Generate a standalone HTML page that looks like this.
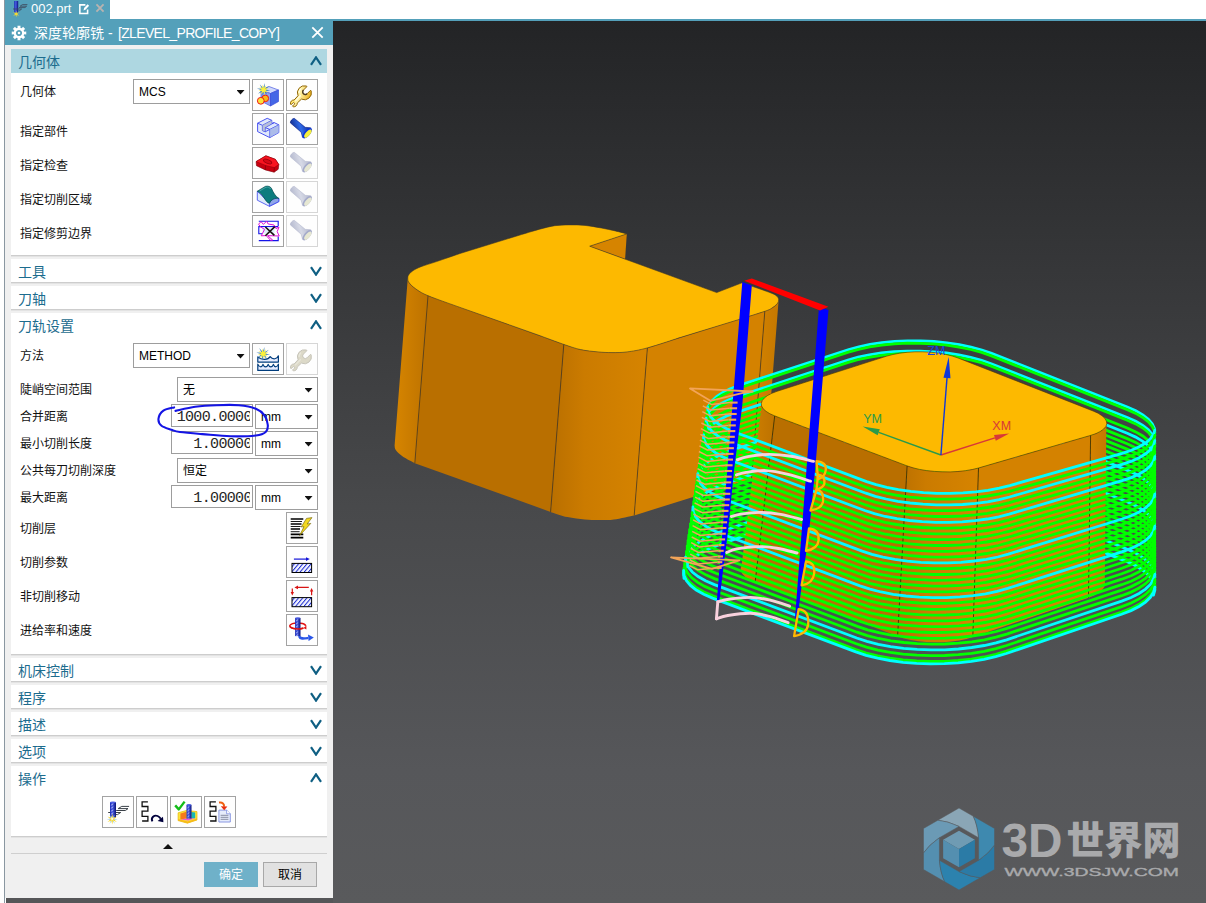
<!DOCTYPE html>
<html lang="zh"><head><meta charset="utf-8"><title>NX</title><style>
*{box-sizing:border-box;margin:0;padding:0}
html,body{width:1206px;height:903px;overflow:hidden;background:#fff}
body{position:relative;font-family:"Liberation Sans","Noto Sans CJK SC",sans-serif;font-size:12px;color:#000}
#vp{overflow:hidden;position:absolute;left:333px;top:21px;width:873px;height:882px;background:linear-gradient(#232426 0%,#48494b 55%,#56575a 85%,#595a5c 100%)}
#vp svg{position:absolute;left:-333px;top:-21px}
#topline{position:absolute;left:5px;top:19px;width:1201px;height:2px;background:#54a0ba}
#tab{position:absolute;left:5px;top:0;width:105px;height:20px;background:#54a0ba;color:#fff;font-size:13px}
#tab span{position:absolute;left:26px;top:1px;line-height:16px}
#title{position:absolute;left:5px;top:19px;width:328px;height:26px;background:#54a0ba;color:#fff;font-size:14px}
#title em{font-style:normal;font-size:14px;letter-spacing:-0.66px;margin-left:1.5px}
#title span{position:absolute;left:29px;top:4px;line-height:20px;white-space:nowrap}
#lline{position:absolute;left:4px;top:0;width:1px;height:903px;background:#8a97a1}
#pbg{position:absolute;left:5px;top:45px;width:328px;height:853px;background:#f0f0f0}
#pbot{position:absolute;left:6px;top:898px;width:327px;height:5px;background:#555658}
.sec{position:absolute;left:11px;width:316px;background:#fff;border-bottom:1px solid #cdcdcd;box-shadow:0 1px 0 #e3e3e3}
.sec b{position:absolute;left:7px;top:3px;font-weight:normal;font-size:14px;line-height:20px;color:#1c6c8e}
.sec.hl::before{content:"";position:absolute;left:0;top:0;width:316px;height:24px;background:#aed7e1}
.sec .chev{position:absolute;right:5px;top:7px;width:12px;height:10px;fill:none;stroke:#0f5f83;stroke-width:2.2}
.lbl{position:absolute;font-size:12px;line-height:16px;white-space:nowrap;color:#111}
.dd{position:absolute;background:#fff;border:1px solid #9d9d9d}
.dd span{position:absolute;top:4px;line-height:17px;font-size:12px;white-space:nowrap}
.dd i{position:absolute;right:4.5px;top:10px;width:8px;height:4.5px;background:#111;clip-path:polygon(0 0,100% 0,50% 100%)}
.inp{position:absolute;background:#fff;border:1px solid #9d9d9d;overflow:hidden}
.inp b{position:absolute;left:0;top:0;bottom:0;right:2.5px;overflow:hidden;font-weight:normal}
.inp span{position:absolute;right:-2.3px;top:2.5px;line-height:20px;font-family:"Liberation Mono",monospace;font-size:15px;white-space:nowrap;letter-spacing:-0.65px;color:#262626}
.btn{position:absolute;width:32px;height:32px;border:1px solid #a3a3a3;background:#fefefe}
.btn.dis{border-color:#d6d6d6}
.btn svg{position:absolute;left:0;top:0;width:30px;height:30px}
#sepa{position:absolute;left:11px;top:853px;width:316px;height:1px;background:#cfcfcf}
#tri{position:absolute;left:163px;top:844px;width:0;height:0;border-left:5px solid transparent;border-right:5px solid transparent;border-bottom:5px solid #111}
#ok{position:absolute;left:204px;top:862px;width:54px;height:25px;background:#6fb1c9;color:#fff;text-align:center;line-height:26px;font-size:12px}
#cancel{position:absolute;left:263px;top:862px;width:54px;height:25px;background:#e1e1e1;border:1px solid #a8a8a8;text-align:center;line-height:24px;font-size:12px}
</style></head><body>
<div id="vp"><svg width="1206" height="903" viewBox="0 0 1206 903">
<defs><linearGradient id="gc1" x1="0" x2="1" y1="0" y2="0"><stop offset="0" stop-color="#b96f00"/><stop offset=".35" stop-color="#cb7b00"/><stop offset="1" stop-color="#d68400"/></linearGradient><linearGradient id="gc2" x1="0" x2="1" y1="0" y2="0"><stop offset="0" stop-color="#d68400"/><stop offset="1" stop-color="#c57800"/></linearGradient><linearGradient id="gc3" x1="0" x2="1" y1="0" y2="0"><stop offset="0" stop-color="#d68500"/><stop offset="1" stop-color="#bd7200"/></linearGradient></defs>
<path d="M589.7,246.2 L626.8,233.9 L625.1,258.9 Z" fill="#d68400"/>
<path d="M407.80,277.90 C408.00,278.68 407.70,280.78 409.00,282.60 C410.30,284.42 412.40,286.60 415.60,288.80 C418.80,291.00 426.10,294.63 428.20,295.80 L415.00,463.30 C412.90,462.13 405.60,458.50 402.40,456.30 C399.20,454.10 397.10,451.92 395.80,450.10 C394.50,448.28 394.80,446.18 394.60,445.40Z" fill="url(#gc3)"/>
<path d="M428.0,295.7 L563.8,344.4 L550.6,511.9 L414.8,463.2Z" fill="#b96f00"/>
<path d="M563.80,344.40 C566.60,345.27 574.90,348.35 580.60,349.60 C586.30,350.85 592.77,351.40 598.00,351.90 C603.23,352.40 607.15,352.60 612.00,352.60 C616.85,352.60 621.20,352.68 627.10,351.90 C633.00,351.12 644.02,348.57 647.40,347.90 L634.20,515.40 C630.82,516.07 619.80,518.62 613.90,519.40 C608.00,520.18 603.65,520.10 598.80,520.10 C593.95,520.10 590.03,519.90 584.80,519.40 C579.57,518.90 573.10,518.35 567.40,517.10 C561.70,515.85 553.40,512.77 550.60,511.90Z" fill="url(#gc1)"/>
<path d="M647.4,347.9 L764.8,311.3 L751.6,478.8 L634.2,515.4Z" fill="#d48200"/>
<path d="M764.80,311.30 C765.93,310.80 769.67,309.42 771.60,308.30 C773.53,307.18 775.23,305.90 776.40,304.60 C777.57,303.30 778.23,301.18 778.60,300.50 L765.40,468.00 C765.03,468.68 764.37,470.80 763.20,472.10 C762.03,473.40 760.33,474.68 758.40,475.80 C756.47,476.92 752.73,478.30 751.60,478.80Z" fill="url(#gc2)"/>
<path d="M460.00,307.40 C454.67,305.45 435.40,298.80 428.00,295.70 C420.60,292.60 418.77,290.98 415.60,288.80 C412.43,286.62 410.30,284.42 409.00,282.60 C407.70,280.78 407.80,279.27 407.80,277.90 C407.80,276.53 408.08,275.63 409.00,274.40 C409.92,273.17 411.30,271.78 413.30,270.50 C415.30,269.22 417.13,268.18 421.00,266.70 C424.87,265.22 430.00,263.80 436.50,261.60 C443.00,259.40 456.08,254.85 460.00,253.50 L520.00,235.00 C523.28,234.03 533.90,230.75 539.70,229.20 C545.50,227.65 549.95,226.42 554.80,225.70 C559.65,224.98 563.77,224.95 568.80,224.90 C573.83,224.85 579.58,224.88 585.00,225.40 C590.42,225.92 596.27,227.08 601.30,228.00 C606.33,228.92 610.95,229.92 615.20,230.90 C619.45,231.88 624.87,233.40 626.80,233.90 L589.7,246.2 L716.7,292.6 L742.00,282.80 C745.00,283.83 755.17,287.30 760.00,289.00 C764.83,290.70 768.40,291.97 771.00,293.00 C773.60,294.03 774.38,294.37 775.60,295.20 C776.82,296.03 777.83,296.93 778.30,298.00 C778.77,299.07 778.72,300.50 778.40,301.60 C778.08,302.70 777.53,303.48 776.40,304.60 C775.27,305.72 773.53,307.18 771.60,308.30 C769.67,309.42 770.07,309.48 764.80,311.30 C759.53,313.12 744.13,317.88 740.00,319.20 L680.00,337.60 C674.57,339.32 656.22,345.52 647.40,347.90 C638.58,350.28 633.00,351.12 627.10,351.90 C621.20,352.68 616.85,352.60 612.00,352.60 C607.15,352.60 603.23,352.40 598.00,351.90 C592.77,351.40 586.30,350.85 580.60,349.60 C574.90,348.35 570.57,346.72 563.80,344.40 C557.03,342.08 543.97,337.15 540.00,335.70Z" fill="#fdb900" stroke="#3a3326" stroke-width="0.55"/>
<g stroke="#2c2a26" stroke-width="0.7" fill="none" opacity=".85">
<path d="M428,295.7 L414.8,463.2"/>
<path d="M563.8,344.4 L550.6,511.9"/>
<path d="M647.4,347.9 L634.2,515.4"/>
<path d="M764.8,311.3 L751.6,478.8"/>
</g>
<g fill="none" stroke-width="2.8" stroke-linecap="round">
<path d="M1153.4,437.4 L1154.8,432.9 L1154.4,428.3 L1152.2,423.7 L1148.4,419.2 L1142.8,414.9 L1135.8,410.8 L1127.3,407.0 L991.6,353.4 L981.9,350.0 L971.0,347.1 L959.3,344.6 L946.9,342.8 L934.0,341.5 L920.8,340.8 L907.6,340.8 L894.6,341.4 L882.0,342.6 L870.0,344.4 L858.9,346.8 L848.8,349.6 L739.3,385.4 L730.4,388.8 L722.8,392.5 L716.6,396.5 L712.0,400.8 L709.0,405.3 L707.7,409.8 L708.1,414.4" stroke="#00ffff"/>
<path d="M1153.5,440.0 L1154.8,435.5 L1154.4,430.9 L1152.2,426.3 L1148.4,421.8 L1142.8,417.5 L1135.8,413.4 L1127.3,409.6 L991.5,355.9 L981.7,352.4 L970.9,349.5 L959.1,347.1 L946.7,345.2 L933.7,343.9 L920.5,343.3 L907.3,343.2 L894.3,343.8 L881.7,345.1 L869.7,346.9 L858.5,349.3 L848.4,352.2 L738.6,388.2 L729.6,391.5 L722.0,395.3 L715.8,399.3 L711.2,403.6 L708.2,408.1 L706.9,412.7 L707.3,417.3" stroke="#00ff00"/>
<path d="M1153.5,448.1 L1154.8,443.6 L1154.4,439.0 L1152.2,434.4 L1148.4,429.8 L1142.8,425.5 L1135.8,421.3 L1127.3,417.5 L991.3,363.7 L981.6,360.3 L970.7,357.3 L958.9,354.9 L946.5,353.0 L933.5,351.8 L920.3,351.1 L907.0,351.1 L894.0,351.7 L881.3,352.9 L869.3,354.8 L858.1,357.2 L847.9,360.1 L737.9,396.3 L728.9,399.7 L721.2,403.4 L715.0,407.5 L710.4,411.8 L707.4,416.3 L706.1,420.9 L706.5,425.5" stroke="#00ffff"/>
<path d="M1153.5,450.8 L1154.8,446.2 L1154.4,441.6 L1152.2,437.0 L1148.4,432.4 L1142.8,428.0 L1135.7,423.9 L1127.2,420.1 L991.2,366.1 L981.4,362.7 L970.5,359.8 L958.7,357.3 L946.2,355.5 L933.3,354.2 L920.0,353.6 L906.8,353.5 L893.7,354.2 L881.0,355.4 L868.9,357.3 L857.7,359.7 L847.5,362.6 L737.1,399.0 L728.1,402.4 L720.4,406.2 L714.2,410.3 L709.6,414.7 L706.6,419.2 L705.2,423.8 L705.6,428.4" stroke="#00ff00"/>
<path d="M1153.5,458.8 L1154.8,454.3 L1154.4,449.6 L1152.2,445.0 L1148.3,440.4 L1142.8,436.0 L1135.7,431.9 L1127.2,428.0 L991.0,374.0 L981.2,370.6 L970.3,367.6 L958.5,365.2 L946.0,363.3 L933.0,362.0 L919.8,361.4 L906.5,361.4 L893.4,362.0 L880.6,363.3 L868.6,365.2 L857.3,367.6 L847.1,370.6 L736.4,407.2 L727.4,410.6 L719.7,414.4 L713.4,418.5 L708.7,422.9 L705.7,427.4 L704.4,432.0 L704.8,436.7" stroke="#00ff00"/>
<path d="M1153.5,464.2 L1154.8,459.6 L1154.4,454.9 L1152.2,450.3 L1148.3,445.7 L1142.8,441.3 L1135.7,437.1 L1127.2,433.3 L990.9,379.1 L981.1,375.7 L970.2,372.7 L958.4,370.3 L945.8,368.4 L932.8,367.2 L919.5,366.5 L906.2,366.6 L893.0,367.2 L880.3,368.5 L868.2,370.4 L856.9,372.8 L846.7,375.8 L735.7,412.6 L726.6,416.0 L718.9,419.9 L712.6,424.0 L707.9,428.4 L704.9,433.0 L703.6,437.6 L704.0,442.3" stroke="#00ffff"/>
<path d="M1153.5,469.6 L1154.8,465.0 L1154.4,460.3 L1152.2,455.6 L1148.3,451.0 L1142.8,446.6 L1135.7,442.4 L1127.2,438.6 L990.7,384.3 L980.9,380.8 L970.0,377.9 L958.2,375.4 L945.6,373.6 L932.6,372.3 L919.3,371.7 L905.9,371.7 L892.7,372.4 L880.0,373.7 L867.8,375.6 L856.5,378.0 L846.2,381.0 L734.9,418.0 L725.8,421.5 L718.1,425.3 L711.8,429.5 L707.1,433.9 L704.1,438.5 L702.8,443.2 L703.2,447.8" stroke="#00ff00"/>
<path d="M1153.5,474.9 L1154.8,470.3 L1154.4,465.6 L1152.2,460.9 L1148.3,456.3 L1142.8,451.9 L1135.7,447.7 L1127.1,443.8 L990.6,389.4 L980.7,386.0 L969.8,383.0 L958.0,380.6 L945.4,378.7 L932.3,377.5 L919.0,376.8 L905.6,376.9 L892.4,377.5 L879.6,378.8 L867.5,380.7 L856.1,383.2 L845.8,386.2 L734.2,423.5 L725.1,426.9 L717.3,430.8 L711.0,435.0 L706.3,439.4 L703.3,444.0 L702.0,448.7 L702.4,453.4" stroke="#00ff00"/>
<path d="M1153.5,480.3 L1154.8,475.6 L1154.4,470.9 L1152.2,466.2 L1148.3,461.6 L1142.8,457.1 L1135.7,452.9 L1127.1,449.1 L990.4,394.6 L980.6,391.1 L969.6,388.1 L957.8,385.7 L945.2,383.8 L932.1,382.6 L918.8,382.0 L905.3,382.0 L892.1,382.7 L879.3,384.0 L867.1,385.9 L855.7,388.4 L845.4,391.5 L733.5,428.9 L724.3,432.4 L716.5,436.3 L710.2,440.5 L705.5,444.9 L702.5,449.6 L701.1,454.3 L701.5,459.0" stroke="#00ff00"/>
<path d="M1153.5,485.7 L1154.8,481.0 L1154.4,476.2 L1152.2,471.5 L1148.3,466.9 L1142.8,462.4 L1135.7,458.2 L1127.1,454.3 L990.3,399.7 L980.4,396.3 L969.5,393.3 L957.6,390.8 L945.0,389.0 L931.9,387.7 L918.5,387.1 L905.1,387.2 L891.8,387.9 L879.0,389.2 L866.7,391.1 L855.3,393.6 L845.0,396.7 L732.7,434.4 L723.6,437.9 L715.8,441.8 L709.4,446.0 L704.7,450.5 L701.6,455.1 L700.3,459.8 L700.7,464.6" stroke="#00ff00"/>
<path d="M1153.5,491.0 L1154.8,486.3 L1154.4,481.6 L1152.2,476.8 L1148.3,472.2 L1142.8,467.7 L1135.6,463.5 L1127.1,459.6 L990.1,404.9 L980.3,401.4 L969.3,398.4 L957.4,396.0 L944.8,394.1 L931.7,392.9 L918.2,392.3 L904.8,392.3 L891.5,393.0 L878.6,394.4 L866.4,396.3 L854.9,398.9 L844.5,401.9 L732.0,439.8 L722.8,443.3 L715.0,447.2 L708.6,451.5 L703.9,456.0 L700.8,460.6 L699.5,465.4 L699.9,470.1" stroke="#00ff00"/>
<path d="M1153.5,496.4 L1154.8,491.7 L1154.4,486.9 L1152.2,482.1 L1148.3,477.5 L1142.8,473.0 L1135.6,468.7 L1127.0,464.8 L990.0,410.0 L980.1,406.5 L969.1,403.5 L957.2,401.1 L944.6,399.2 L931.4,398.0 L918.0,397.4 L904.5,397.5 L891.2,398.2 L878.3,399.5 L866.0,401.5 L854.5,404.1 L844.1,407.1 L731.3,445.2 L722.1,448.8 L714.2,452.7 L707.8,457.0 L703.1,461.5 L700.0,466.2 L698.7,470.9 L699.1,475.7" stroke="#00ff00"/>
<path d="M1153.5,501.8 L1154.8,497.0 L1154.4,492.2 L1152.2,487.4 L1148.3,482.7 L1142.7,478.2 L1135.6,474.0 L1127.0,470.1 L989.8,415.1 L979.9,411.7 L968.9,408.7 L957.0,406.2 L944.4,404.4 L931.2,403.1 L917.7,402.6 L904.2,402.6 L890.9,403.4 L877.9,404.7 L865.6,406.7 L854.1,409.3 L843.7,412.4 L730.6,450.7 L721.3,454.2 L713.4,458.2 L707.1,462.5 L702.3,467.0 L699.2,471.7 L697.8,476.5 L698.3,481.3" stroke="#00ffff"/>
<path d="M1153.5,507.1 L1154.8,502.4 L1154.4,497.5 L1152.2,492.7 L1148.3,488.0 L1142.7,483.5 L1135.6,479.3 L1127.0,475.4 L989.7,420.3 L979.8,416.8 L968.8,413.8 L956.8,411.4 L944.1,409.5 L931.0,408.3 L917.5,407.7 L903.9,407.8 L890.6,408.5 L877.6,409.9 L865.3,411.9 L853.8,414.5 L843.3,417.6 L729.8,456.1 L720.6,459.7 L712.7,463.7 L706.3,468.0 L701.5,472.5 L698.4,477.2 L697.0,482.1 L697.4,486.9" stroke="#00ff00"/>
<path d="M1153.5,512.5 L1154.8,507.7 L1154.4,502.9 L1152.2,498.0 L1148.3,493.3 L1142.7,488.8 L1135.6,484.5 L1127.0,480.6 L989.5,425.4 L979.6,421.9 L968.6,418.9 L956.6,416.5 L943.9,414.6 L930.7,413.4 L917.2,412.8 L903.7,412.9 L890.3,413.7 L877.3,415.1 L864.9,417.1 L853.4,419.7 L842.9,422.8 L729.1,461.5 L719.8,465.1 L711.9,469.1 L705.5,473.5 L700.7,478.0 L697.6,482.8 L696.2,487.6 L696.6,492.5" stroke="#00ff00"/>
<path d="M1153.5,517.9 L1154.8,513.1 L1154.4,508.2 L1152.2,503.4 L1148.3,498.6 L1142.7,494.1 L1135.6,489.8 L1127.0,485.9 L989.4,430.6 L979.5,427.1 L968.4,424.1 L956.4,421.6 L943.7,419.8 L930.5,418.6 L917.0,418.0 L903.4,418.1 L889.9,418.9 L876.9,420.3 L864.5,422.3 L853.0,424.9 L842.4,428.0 L728.4,467.0 L719.0,470.6 L711.1,474.6 L704.7,479.0 L699.9,483.6 L696.7,488.3 L695.4,493.2 L695.8,498.0" stroke="#00ff00"/>
<path d="M1153.5,523.2 L1154.8,518.4 L1154.4,513.5 L1152.2,508.7 L1148.3,503.9 L1142.7,499.4 L1135.5,495.1 L1126.9,491.1 L989.2,435.7 L979.3,432.2 L968.2,429.2 L956.3,426.8 L943.5,424.9 L930.3,423.7 L916.7,423.1 L903.1,423.2 L889.6,424.0 L876.6,425.4 L864.2,427.5 L852.6,430.1 L842.0,433.3 L727.6,472.4 L718.3,476.0 L710.3,480.1 L703.9,484.5 L699.0,489.1 L695.9,493.9 L694.6,498.7 L695.0,503.6" stroke="#00ff00"/>
<path d="M1153.5,528.6 L1154.8,523.8 L1154.4,518.8 L1152.2,514.0 L1148.3,509.2 L1142.7,504.6 L1135.5,500.3 L1126.9,496.4 L989.1,440.9 L979.1,437.4 L968.1,434.3 L956.1,431.9 L943.3,430.0 L930.0,428.8 L916.5,428.3 L902.8,428.4 L889.3,429.2 L876.2,430.6 L863.8,432.7 L852.2,435.3 L841.6,438.5 L726.9,477.8 L717.5,481.5 L709.5,485.6 L703.1,489.9 L698.2,494.6 L695.1,499.4 L693.7,504.3 L694.2,509.2" stroke="#00ff00"/>
<path d="M1153.5,534.0 L1154.8,529.1 L1154.4,524.2 L1152.2,519.3 L1148.3,514.5 L1142.7,509.9 L1135.5,505.6 L1126.9,501.7 L988.9,446.0 L979.0,442.5 L967.9,439.5 L955.9,437.0 L943.1,435.2 L929.8,434.0 L916.2,433.4 L902.5,433.6 L889.0,434.3 L875.9,435.8 L863.4,437.9 L851.8,440.5 L841.2,443.7 L726.2,483.3 L716.8,487.0 L708.8,491.0 L702.3,495.4 L697.4,500.1 L694.3,504.9 L692.9,509.8 L693.3,514.8" stroke="#00ffff"/>
<path d="M1153.5,539.3 L1154.8,534.4 L1154.4,529.5 L1152.2,524.6 L1148.3,519.8 L1142.7,515.2 L1135.5,510.9 L1126.9,506.9 L988.7,451.2 L978.8,447.6 L967.7,444.6 L955.7,442.2 L942.9,440.3 L929.6,439.1 L915.9,438.6 L902.2,438.7 L888.7,439.5 L875.6,441.0 L863.1,443.1 L851.4,445.7 L840.7,449.0 L725.4,488.7 L716.0,492.4 L708.0,496.5 L701.5,500.9 L696.6,505.6 L693.5,510.5 L692.1,515.4 L692.5,520.3" stroke="#00ff00"/>
<path d="M1153.5,544.7 L1154.8,539.8 L1154.4,534.8 L1152.2,529.9 L1148.3,525.1 L1142.7,520.5 L1135.5,516.1 L1126.8,512.2 L988.6,456.3 L978.6,452.8 L967.5,449.8 L955.5,447.3 L942.7,445.5 L929.3,444.3 L915.7,443.7 L902.0,443.9 L888.4,444.7 L875.2,446.1 L862.7,448.3 L851.0,450.9 L840.3,454.2 L724.7,494.2 L715.3,497.9 L707.2,502.0 L700.7,506.4 L695.8,511.1 L692.7,516.0 L691.3,521.0 L691.7,525.9" stroke="#00ff00"/>
<path d="M1153.5,550.1 L1154.8,545.1 L1154.4,540.2 L1152.2,535.2 L1148.3,530.4 L1142.7,525.7 L1135.5,521.4 L1126.8,517.4 L988.4,461.5 L978.5,457.9 L967.4,454.9 L955.3,452.4 L942.5,450.6 L929.1,449.4 L915.4,448.9 L901.7,449.0 L888.1,449.8 L874.9,451.3 L862.3,453.4 L850.6,456.2 L839.9,459.4 L724.0,499.6 L714.5,503.3 L706.4,507.5 L699.9,511.9 L695.0,516.7 L691.8,521.5 L690.5,526.5 L690.9,531.5" stroke="#00ff00"/>
<path d="M1153.5,555.4 L1154.9,550.5 L1154.4,545.5 L1152.2,540.5 L1148.3,535.7 L1142.7,531.0 L1135.5,526.7 L1126.8,522.7 L988.3,466.6 L978.3,463.1 L967.2,460.0 L955.1,457.6 L942.3,455.7 L928.9,454.5 L915.2,454.0 L901.4,454.2 L887.8,455.0 L874.6,456.5 L862.0,458.6 L850.2,461.4 L839.5,464.6 L723.3,505.0 L713.8,508.8 L705.7,512.9 L699.1,517.4 L694.2,522.2 L691.0,527.1 L689.6,532.1 L690.1,537.1" stroke="#00ff00"/>
<path d="M1153.5,560.8 L1154.9,555.8 L1154.4,550.8 L1152.2,545.8 L1148.3,541.0 L1142.6,536.3 L1135.4,531.9 L1126.8,527.9 L988.1,471.7 L978.2,468.2 L967.0,465.2 L954.9,462.7 L942.0,460.9 L928.6,459.7 L914.9,459.2 L901.1,459.3 L887.5,460.2 L874.2,461.7 L861.6,463.8 L849.8,466.6 L839.0,469.9 L722.5,510.5 L713.0,514.2 L704.9,518.4 L698.3,522.9 L693.4,527.7 L690.2,532.6 L688.8,537.6 L689.2,542.6" stroke="#00ff00"/>
<path d="M1153.5,566.2 L1154.9,561.2 L1154.4,556.1 L1152.2,551.1 L1148.3,546.3 L1142.6,541.6 L1135.4,537.2 L1126.7,533.2 L988.0,476.9 L978.0,473.3 L966.8,470.3 L954.7,467.8 L941.8,466.0 L928.4,464.8 L914.7,464.3 L900.8,464.5 L887.2,465.3 L873.9,466.9 L861.2,469.0 L849.4,471.8 L838.6,475.1 L721.8,515.9 L712.3,519.7 L704.1,523.9 L697.5,528.4 L692.6,533.2 L689.4,538.2 L688.0,543.2 L688.4,548.2" stroke="#00ff00"/>
<path d="M1153.5,571.5 L1154.9,566.5 L1154.4,561.5 L1152.2,556.4 L1148.3,551.5 L1142.6,546.9 L1135.4,542.5 L1126.7,538.5 L987.8,482.0 L977.8,478.5 L966.7,475.4 L954.5,473.0 L941.6,471.1 L928.2,469.9 L914.4,469.4 L900.6,469.6 L886.9,470.5 L873.5,472.0 L860.9,474.2 L849.0,477.0 L838.2,480.3 L721.1,521.3 L711.5,525.1 L703.3,529.4 L696.7,533.9 L691.8,538.7 L688.6,543.7 L687.2,548.7 L687.6,553.8" stroke="#00ff00"/>
<path d="M1153.5,576.9 L1154.9,571.9 L1154.4,566.8 L1152.2,561.7 L1148.3,556.8 L1142.6,552.1 L1135.4,547.7 L1126.7,543.7 L987.7,487.2 L977.7,483.6 L966.5,480.6 L954.3,478.1 L941.4,476.3 L927.9,475.1 L914.1,474.6 L900.3,474.8 L886.5,475.7 L873.2,477.2 L860.5,479.4 L848.6,482.2 L837.8,485.5 L720.3,526.8 L710.7,530.6 L702.6,534.8 L695.9,539.4 L691.0,544.2 L687.7,549.2 L686.4,554.3 L686.8,559.4" stroke="#00ff00"/>
<path d="M1153.5,582.2 L1154.9,577.2 L1154.4,572.1 L1152.2,567.1 L1148.3,562.1 L1142.6,557.4 L1135.4,553.0 L1126.7,549.0 L987.5,492.3 L977.5,488.7 L966.3,485.7 L954.1,483.2 L941.2,481.4 L927.7,480.2 L913.9,479.7 L900.0,479.9 L886.2,480.8 L872.9,482.4 L860.1,484.6 L848.2,487.4 L837.4,490.8 L719.6,532.2 L710.0,536.1 L701.8,540.3 L695.1,544.9 L690.1,549.8 L686.9,554.8 L685.5,559.9 L686.0,564.9" stroke="#00ffff"/>
<path d="M1153.5,587.6 L1154.9,582.5 L1154.4,577.4 L1152.2,572.4 L1148.2,567.4 L1142.6,562.7 L1135.4,558.3 L1126.7,554.2 L987.4,497.5 L977.3,493.9 L966.1,490.8 L954.0,488.4 L941.0,486.5 L927.5,485.4 L913.6,484.9 L899.7,485.1 L885.9,486.0 L872.5,487.6 L859.8,489.8 L847.8,492.6 L836.9,496.0 L718.9,537.7 L709.2,541.5 L701.0,545.8 L694.3,550.4 L689.3,555.3 L686.1,560.3 L684.7,565.4 L685.1,570.5" stroke="#00ff00"/>
<path d="M1153.5,593.0 L1154.9,587.9 L1154.4,582.8 L1152.2,577.7 L1148.2,572.7 L1142.6,568.0 L1135.3,563.5 L1126.6,559.5 L987.2,502.6 L977.2,499.0 L966.0,496.0 L953.8,493.5 L940.8,491.7 L927.2,490.5 L913.4,490.0 L899.4,490.2 L885.6,491.2 L872.2,492.7 L859.4,495.0 L847.4,497.8 L836.5,501.2 L718.1,543.1 L708.5,547.0 L700.2,551.3 L693.5,555.9 L688.5,560.8 L685.3,565.8 L683.9,571.0 L684.3,576.1" stroke="#00ff00"/>
<path d="M1153.5,595.1 L1154.9,590.0 L1154.4,584.9 L1152.2,579.8 L1148.2,574.8 L1142.6,570.1 L1135.3,565.6 L1126.6,561.6 L987.2,504.7 L977.1,501.1 L965.9,498.0 L953.7,495.6 L940.7,493.7 L927.2,492.6 L913.3,492.1 L899.3,492.3 L885.5,493.2 L872.1,494.8 L859.2,497.1 L847.3,499.9 L836.3,503.3 L717.9,545.3 L708.2,549.2 L699.9,553.5 L693.2,558.1 L688.2,563.0 L685.0,568.1 L683.6,573.2 L684.0,578.3" stroke="#00ffff"/>
</g>
<path d="M762.2,400.6 L761.3,403.4 L761.6,406.1 L763.2,408.8 L766.0,411.3 L769.8,413.7 L774.7,415.9 L755.1,582.2 L749.8,579.8 L745.7,577.2 L742.7,574.3 L741.0,571.3 L740.7,568.2 L741.6,565.2Z" fill="url(#gc3)"/>
<path d="M774.7,415.9 L907.1,465.9 L897.6,636.3 L755.1,582.2Z" fill="#b96f00"/>
<path d="M907.1,465.9 L912.9,467.8 L919.5,469.4 L926.6,470.6 L934.3,471.4 L942.1,471.8 L950.1,471.9 L957.9,471.5 L965.3,470.7 L972.3,469.5 L978.5,468.0 L972.8,637.1 L966.4,639.0 L959.1,640.5 L951.4,641.6 L943.2,642.2 L934.8,642.3 L926.5,642.0 L918.5,641.2 L910.8,640.0 L903.8,638.4 L897.6,636.3Z" fill="url(#gc1)"/>
<path d="M978.5,468.0 L1090.6,435.4 L1088.5,597.7 L972.8,637.1Z" fill="#d48200"/>
<path d="M1090.6,435.4 L1096.0,433.6 L1100.4,431.4 L1103.7,429.0 L1105.9,426.5 L1106.8,423.8 L1106.4,421.1 L1104.8,581.0 L1105.1,584.1 L1104.2,587.2 L1102.0,590.1 L1098.6,592.9 L1094.0,595.4 L1088.5,597.7Z" fill="url(#gc2)"/>
<path d="M907.1,465.9 L912.9,467.8 L919.5,469.4 L926.6,470.6 L934.3,471.4 L942.1,471.8 L950.1,471.9 L957.9,471.5 L965.3,470.7 L972.3,469.5 L978.5,468.0 L1090.6,435.4 L1096.0,433.6 L1100.4,431.4 L1103.7,429.0 L1105.9,426.5 L1106.8,423.8 L1106.4,421.1 L1104.8,418.3 L1102.0,415.7 L1098.1,413.2 L1093.1,411.0 L958.1,358.0 L952.2,356.0 L945.5,354.4 L938.3,353.1 L930.6,352.2 L922.8,351.8 L914.9,351.8 L907.1,352.3 L899.7,353.2 L892.9,354.5 L886.8,356.1 L777.1,391.3 L771.8,393.3 L767.5,395.5 L764.3,398.0 L762.2,400.6 L761.3,403.4 L761.6,406.1 L763.2,408.8 L766.0,411.3 L769.8,413.7 L774.7,415.9Z" fill="#fdb900" stroke="#4a3200" stroke-width="0.6"/>
<g stroke="#3b2800" stroke-width="0.8" fill="none">
<path d="M774.7,415.9 L755.1,582.2"/>
<path d="M907.1,465.9 L897.6,636.3"/>
<path d="M978.5,468.0 L972.8,637.1"/>
<path d="M1090.6,435.4 L1088.5,597.7"/>
</g>
<g fill="none" stroke-width="2.8" stroke-linecap="round">
<path d="M707.7,407.0 L708.1,411.6 L710.2,416.1 L714.0,420.4 L719.3,424.6 L726.2,428.5 L734.4,432.0 L866.6,481.6 L876.1,484.7 L886.8,487.4 L898.3,489.7 L910.7,491.4 L923.5,492.6 L936.7,493.3 L949.9,493.4 L963.0,492.9 L975.8,491.9 L987.9,490.3 L999.3,488.2 L1009.7,485.6 L1122.2,453.3 L1131.4,450.3 L1139.2,446.8 L1145.6,443.0 L1150.4,438.9 L1153.4,434.6 L1154.8,430.1" stroke="#00ffff"/>
<path d="M706.9,412.6 L707.3,417.2 L709.4,421.7 L713.1,426.1 L718.5,430.2 L725.4,434.1 L733.7,437.7 L866.2,487.4 L875.8,490.5 L886.4,493.2 L898.1,495.5 L910.4,497.2 L923.3,498.4 L936.5,499.1 L949.7,499.2 L962.9,498.7 L975.6,497.6 L987.8,496.0 L999.2,493.9 L1009.6,491.3 L1122.2,458.8 L1131.4,455.7 L1139.2,452.3 L1145.6,448.4 L1150.4,444.3 L1153.5,439.9 L1154.8,435.4" stroke="#00ff00"/>
<path d="M706.1,418.1 L706.5,422.7 L708.6,427.3 L712.3,431.7 L717.7,435.9 L724.6,439.8 L732.9,443.3 L865.9,493.2 L875.4,496.3 L886.1,499.0 L897.8,501.3 L910.1,503.0 L923.0,504.2 L936.2,504.9 L949.5,504.9 L962.7,504.5 L975.5,503.4 L987.7,501.8 L999.1,499.6 L1009.5,497.0 L1122.2,464.3 L1131.4,461.2 L1139.2,457.7 L1145.6,453.8 L1150.4,449.7 L1153.5,445.3 L1154.8,440.8" stroke="#00ffff"/>
<path d="M705.2,423.7 L705.6,428.3 L707.8,432.9 L711.5,437.3 L716.9,441.5 L723.9,445.4 L732.2,449.0 L865.5,499.0 L875.1,502.1 L885.8,504.9 L897.5,507.1 L909.9,508.8 L922.8,510.0 L936.0,510.7 L949.4,510.7 L962.5,510.2 L975.3,509.2 L987.5,507.5 L998.9,505.4 L1009.3,502.7 L1122.1,469.8 L1131.4,466.7 L1139.2,463.1 L1145.6,459.3 L1150.4,455.1 L1153.5,450.7 L1154.8,446.1" stroke="#00ff00"/>
<path d="M704.4,429.2 L704.8,433.9 L706.9,438.5 L710.7,442.9 L716.2,447.1 L723.1,451.0 L731.5,454.6 L865.1,504.8 L874.8,507.9 L885.5,510.7 L897.2,512.9 L909.6,514.7 L922.6,515.9 L935.8,516.5 L949.2,516.5 L962.4,516.0 L975.2,514.9 L987.4,513.3 L998.8,511.1 L1009.2,508.4 L1122.1,475.2 L1131.3,472.1 L1139.2,468.6 L1145.6,464.7 L1150.4,460.5 L1153.5,456.0 L1154.8,451.5" stroke="#00ff00"/>
<path d="M703.6,434.8 L704.0,439.5 L706.1,444.1 L709.9,448.5 L715.4,452.7 L722.3,456.7 L730.7,460.3 L864.8,510.5 L874.4,513.7 L885.2,516.5 L896.9,518.7 L909.4,520.5 L922.3,521.7 L935.6,522.3 L949.0,522.3 L962.2,521.8 L975.0,520.7 L987.3,519.0 L998.7,516.8 L1009.1,514.2 L1122.1,480.7 L1131.3,477.6 L1139.2,474.0 L1145.6,470.1 L1150.4,465.9 L1153.5,461.4 L1154.8,456.8" stroke="#00ffff"/>
<path d="M702.8,440.4 L703.2,445.0 L705.3,449.7 L709.1,454.1 L714.6,458.4 L721.6,462.3 L730.0,465.9 L864.4,516.3 L874.1,519.5 L884.9,522.3 L896.6,524.5 L909.1,526.3 L922.1,527.5 L935.4,528.1 L948.8,528.1 L962.0,527.6 L974.9,526.5 L987.1,524.8 L998.6,522.6 L1009.0,519.9 L1122.1,486.2 L1131.3,483.0 L1139.2,479.4 L1145.6,475.5 L1150.4,471.2 L1153.5,466.8 L1154.8,462.2" stroke="#00ff00"/>
<path d="M702.0,445.9 L702.4,450.6 L704.5,455.2 L708.3,459.7 L713.8,464.0 L720.8,468.0 L729.2,471.6 L864.0,522.1 L873.7,525.3 L884.6,528.1 L896.3,530.4 L908.8,532.1 L921.9,533.3 L935.2,533.9 L948.6,533.9 L961.9,533.4 L974.7,532.2 L987.0,530.5 L998.5,528.3 L1008.9,525.6 L1122.1,491.7 L1131.3,488.5 L1139.2,484.9 L1145.6,480.9 L1150.4,476.6 L1153.5,472.1 L1154.8,467.5" stroke="#00ff00"/>
<path d="M701.1,451.5 L701.5,456.2 L703.7,460.8 L707.5,465.3 L713.0,469.6 L720.0,473.6 L728.5,477.2 L863.7,527.9 L873.4,531.1 L884.2,533.9 L896.0,536.2 L908.6,537.9 L921.6,539.1 L935.0,539.7 L948.4,539.7 L961.7,539.1 L974.6,538.0 L986.9,536.3 L998.3,534.0 L1008.8,531.3 L1122.0,497.1 L1131.3,493.9 L1139.2,490.3 L1145.6,486.3 L1150.4,482.0 L1153.5,477.5 L1154.8,472.8" stroke="#00ff00"/>
<path d="M700.3,457.0 L700.7,461.8 L702.9,466.4 L706.7,471.0 L712.2,475.2 L719.3,479.2 L727.8,482.9 L863.3,533.7 L873.0,536.9 L883.9,539.7 L895.7,542.0 L908.3,543.7 L921.4,544.9 L934.8,545.5 L948.2,545.5 L961.5,544.9 L974.4,543.7 L986.7,542.0 L998.2,539.8 L1008.7,537.0 L1122.0,502.6 L1131.3,499.4 L1139.2,495.7 L1145.6,491.7 L1150.4,487.4 L1153.5,482.9 L1154.8,478.2" stroke="#00ff00"/>
<path d="M699.5,462.6 L699.9,467.3 L702.1,472.0 L705.9,476.6 L711.4,480.9 L718.5,484.9 L727.0,488.5 L862.9,539.5 L872.7,542.7 L883.6,545.5 L895.5,547.8 L908.0,549.5 L921.2,550.7 L934.6,551.3 L948.0,551.3 L961.4,550.7 L974.3,549.5 L986.6,547.8 L998.1,545.5 L1008.6,542.7 L1122.0,508.1 L1131.3,504.8 L1139.2,501.2 L1145.6,497.1 L1150.4,492.8 L1153.5,488.2 L1154.8,483.5" stroke="#00ff00"/>
<path d="M698.7,468.1 L699.1,472.9 L701.3,477.6 L705.1,482.2 L710.7,486.5 L717.7,490.5 L726.3,494.2 L862.5,545.3 L872.4,548.5 L883.3,551.3 L895.2,553.6 L907.8,555.3 L920.9,556.5 L934.4,557.1 L947.8,557.1 L961.2,556.5 L974.1,555.3 L986.5,553.5 L998.0,551.2 L1008.4,548.4 L1122.0,513.5 L1131.3,510.3 L1139.2,506.6 L1145.6,502.5 L1150.4,498.2 L1153.5,493.6 L1154.8,488.9" stroke="#00ff00"/>
<path d="M697.8,473.7 L698.3,478.5 L700.4,483.2 L704.3,487.8 L709.9,492.1 L717.0,496.2 L725.5,499.8 L862.2,551.1 L872.0,554.4 L883.0,557.1 L894.9,559.4 L907.5,561.1 L920.7,562.3 L934.1,562.9 L947.7,562.9 L961.0,562.3 L974.0,561.0 L986.3,559.3 L997.8,557.0 L1008.3,554.1 L1122.0,519.0 L1131.2,515.7 L1139.2,512.0 L1145.6,507.9 L1150.4,503.6 L1153.5,499.0 L1154.8,494.2" stroke="#00ffff"/>
<path d="M697.0,479.3 L697.4,484.1 L699.6,488.8 L703.5,493.4 L709.1,497.7 L716.2,501.8 L724.8,505.5 L861.8,556.9 L871.7,560.2 L882.7,562.9 L894.6,565.2 L907.3,567.0 L920.4,568.1 L933.9,568.7 L947.5,568.7 L960.9,568.0 L973.8,566.8 L986.2,565.0 L997.7,562.7 L1008.2,559.8 L1121.9,524.5 L1131.2,521.2 L1139.2,517.4 L1145.6,513.3 L1150.4,508.9 L1153.5,504.3 L1154.8,499.6" stroke="#00ff00"/>
<path d="M696.2,484.8 L696.6,489.7 L698.8,494.4 L702.7,499.0 L708.3,503.4 L715.5,507.4 L724.0,511.1 L861.4,562.7 L871.3,566.0 L882.4,568.8 L894.3,571.0 L907.0,572.8 L920.2,573.9 L933.7,574.5 L947.3,574.5 L960.7,573.8 L973.7,572.6 L986.1,570.8 L997.6,568.4 L1008.1,565.5 L1121.9,530.0 L1131.2,526.6 L1139.1,522.9 L1145.6,518.8 L1150.4,514.3 L1153.5,509.7 L1154.8,504.9" stroke="#00ff00"/>
<path d="M695.4,490.4 L695.8,495.2 L698.0,500.0 L701.9,504.6 L707.5,509.0 L714.7,513.1 L723.3,516.8 L861.1,568.5 L871.0,571.8 L882.0,574.6 L894.0,576.8 L906.7,578.6 L920.0,579.7 L933.5,580.3 L947.1,580.2 L960.5,579.6 L973.5,578.3 L985.9,576.5 L997.5,574.1 L1008.0,571.3 L1121.9,535.4 L1131.2,532.1 L1139.1,528.3 L1145.6,524.2 L1150.4,519.7 L1153.5,515.1 L1154.8,510.3" stroke="#00ff00"/>
<path d="M694.6,495.9 L695.0,500.8 L697.2,505.6 L701.1,510.2 L706.7,514.6 L713.9,518.7 L722.6,522.4 L860.7,574.3 L870.6,577.6 L881.7,580.4 L893.7,582.7 L906.5,584.4 L919.7,585.5 L933.3,586.1 L946.9,586.0 L960.3,585.4 L973.4,584.1 L985.8,582.3 L997.4,579.9 L1007.9,577.0 L1121.9,540.9 L1131.2,537.5 L1139.1,533.7 L1145.6,529.6 L1150.4,525.1 L1153.5,520.4 L1154.8,515.6" stroke="#00ff00"/>
<path d="M693.7,501.5 L694.2,506.4 L696.4,511.2 L700.3,515.8 L706.0,520.3 L713.2,524.4 L721.8,528.1 L860.3,580.1 L870.3,583.4 L881.4,586.2 L893.4,588.5 L906.2,590.2 L919.5,591.4 L933.1,591.9 L946.7,591.8 L960.2,591.2 L973.2,589.9 L985.7,588.0 L997.2,585.6 L1007.8,582.7 L1121.9,546.4 L1131.2,543.0 L1139.1,539.2 L1145.6,535.0 L1150.4,530.5 L1153.5,525.8 L1154.8,521.0" stroke="#00ff00"/>
<path d="M692.9,507.0 L693.3,512.0 L695.6,516.8 L699.5,521.5 L705.2,525.9 L712.4,530.0 L721.1,533.7 L860.0,585.9 L870.0,589.2 L881.1,592.0 L893.2,594.3 L906.0,596.0 L919.3,597.2 L932.9,597.7 L946.5,597.6 L960.0,596.9 L973.1,595.6 L985.5,593.8 L997.1,591.3 L1007.7,588.4 L1121.8,551.9 L1131.2,548.4 L1139.1,544.6 L1145.6,540.4 L1150.4,535.9 L1153.5,531.2 L1154.8,526.3" stroke="#00ffff"/>
<path d="M692.1,512.6 L692.5,517.5 L694.7,522.4 L698.7,527.1 L704.4,531.5 L711.6,535.6 L720.3,539.4 L859.6,591.7 L869.6,595.0 L880.8,597.8 L892.9,600.1 L905.7,601.8 L919.0,603.0 L932.7,603.5 L946.3,603.4 L959.8,602.7 L972.9,601.4 L985.4,599.5 L997.0,597.1 L1007.5,594.1 L1121.8,557.3 L1131.2,553.9 L1139.1,550.0 L1145.6,545.8 L1150.4,541.3 L1153.5,536.5 L1154.8,531.6" stroke="#00ff00"/>
<path d="M691.3,518.2 L691.7,523.1 L693.9,528.0 L697.9,532.7 L703.6,537.1 L710.9,541.3 L719.6,545.0 L859.2,597.5 L869.3,600.8 L880.5,603.6 L892.6,605.9 L905.4,607.6 L918.8,608.8 L932.5,609.3 L946.2,609.2 L959.7,608.5 L972.8,607.2 L985.2,605.3 L996.9,602.8 L1007.4,599.8 L1121.8,562.8 L1131.1,559.4 L1139.1,555.5 L1145.6,551.2 L1150.4,546.7 L1153.5,541.9 L1154.8,537.0" stroke="#00ff00"/>
<path d="M690.5,523.7 L690.9,528.7 L693.1,533.6 L697.1,538.3 L702.8,542.8 L710.1,546.9 L718.9,550.7 L858.9,603.3 L868.9,606.6 L880.1,609.4 L892.3,611.7 L905.2,613.4 L918.6,614.6 L932.2,615.1 L946.0,615.0 L959.5,614.3 L972.6,612.9 L985.1,611.0 L996.7,608.5 L1007.3,605.5 L1121.8,568.3 L1131.1,564.8 L1139.1,560.9 L1145.6,556.6 L1150.4,552.0 L1153.5,547.3 L1154.8,542.3" stroke="#00ff00"/>
<path d="M689.6,529.3 L690.1,534.3 L692.3,539.2 L696.3,543.9 L702.0,548.4 L709.3,552.6 L718.1,556.3 L858.5,609.1 L868.6,612.4 L879.8,615.2 L892.0,617.5 L904.9,619.3 L918.3,620.4 L932.0,620.9 L945.8,620.8 L959.3,620.1 L972.5,618.7 L985.0,616.8 L996.6,614.3 L1007.2,611.2 L1121.8,573.8 L1131.1,570.3 L1139.1,566.3 L1145.6,562.0 L1150.4,557.4 L1153.5,552.6 L1154.9,547.7" stroke="#00ff00"/>
<path d="M688.8,534.8 L689.2,539.8 L691.5,544.8 L695.5,549.5 L701.2,554.0 L708.6,558.2 L717.4,562.0 L858.1,614.9 L868.3,618.2 L879.5,621.0 L891.7,623.3 L904.7,625.1 L918.1,626.2 L931.8,626.7 L945.6,626.6 L959.2,625.8 L972.3,624.5 L984.8,622.5 L996.5,620.0 L1007.1,616.9 L1121.7,579.2 L1131.1,575.7 L1139.1,571.8 L1145.5,567.4 L1150.4,562.8 L1153.5,558.0 L1154.9,553.0" stroke="#00ff00"/>
<path d="M688.0,540.4 L688.4,545.4 L690.7,550.4 L694.7,555.1 L700.5,559.6 L707.8,563.8 L716.6,567.6 L857.8,620.6 L867.9,624.0 L879.2,626.8 L891.4,629.1 L904.4,630.9 L917.9,632.0 L931.6,632.5 L945.4,632.4 L959.0,631.6 L972.2,630.2 L984.7,628.3 L996.4,625.7 L1007.0,622.7 L1121.7,584.7 L1131.1,581.2 L1139.1,577.2 L1145.5,572.8 L1150.4,568.2 L1153.5,563.4 L1154.9,558.4" stroke="#00ff00"/>
<path d="M687.2,545.9 L687.6,551.0 L689.9,556.0 L693.9,560.7 L699.7,565.3 L707.0,569.5 L715.9,573.3 L857.4,626.4 L867.6,629.8 L878.9,632.6 L891.1,635.0 L904.1,636.7 L917.6,637.8 L931.4,638.3 L945.2,638.2 L958.8,637.4 L972.0,636.0 L984.6,634.0 L996.2,631.5 L1006.9,628.4 L1121.7,590.2 L1131.1,586.6 L1139.1,582.6 L1145.5,578.3 L1150.4,573.6 L1153.5,568.7 L1154.9,563.7" stroke="#00ff00"/>
<path d="M686.4,551.5 L686.8,556.6 L689.1,561.5 L693.1,566.4 L698.9,570.9 L706.3,575.1 L715.1,578.9 L857.0,632.2 L867.2,635.6 L878.6,638.5 L890.9,640.8 L903.9,642.5 L917.4,643.6 L931.2,644.1 L945.0,644.0 L958.7,643.2 L971.9,641.8 L984.4,639.8 L996.1,637.2 L1006.7,634.1 L1121.7,595.7 L1131.1,592.1 L1139.1,588.0 L1145.5,583.7 L1150.4,579.0 L1153.5,574.1 L1154.9,569.1" stroke="#00ff00"/>
<path d="M685.5,557.1 L686.0,562.1 L688.2,567.1 L692.3,572.0 L698.1,576.5 L705.5,580.8 L714.4,584.6 L856.7,638.0 L866.9,641.4 L878.3,644.3 L890.6,646.6 L903.6,648.3 L917.2,649.4 L931.0,649.9 L944.8,649.8 L958.5,649.0 L971.7,647.5 L984.3,645.5 L996.0,642.9 L1006.6,639.8 L1121.7,601.1 L1131.1,597.5 L1139.1,593.5 L1145.5,589.1 L1150.4,584.4 L1153.5,579.4 L1154.9,574.4" stroke="#00ffff"/>
<path d="M684.7,562.6 L685.1,567.7 L687.4,572.7 L691.5,577.6 L697.3,582.2 L704.7,586.4 L713.7,590.2 L856.3,643.8 L866.5,647.2 L877.9,650.1 L890.3,652.4 L903.3,654.1 L916.9,655.2 L930.8,655.7 L944.7,655.5 L958.3,654.7 L971.6,653.3 L984.2,651.3 L995.9,648.6 L1006.5,645.5 L1121.7,606.6 L1131.1,603.0 L1139.1,598.9 L1145.5,594.5 L1150.4,589.8 L1153.5,584.8 L1154.9,579.7" stroke="#00ff00"/>
<path d="M683.9,568.2 L684.3,573.3 L686.6,578.3 L690.7,583.2 L696.5,587.8 L704.0,592.0 L712.9,595.9 L855.9,649.6 L866.2,653.0 L877.6,655.9 L890.0,658.2 L903.1,659.9 L916.7,661.0 L930.6,661.5 L944.5,661.3 L958.2,660.5 L971.4,659.1 L984.0,657.0 L995.8,654.4 L1006.4,651.2 L1121.6,612.1 L1131.0,608.4 L1139.1,604.3 L1145.5,599.9 L1150.4,595.1 L1153.5,590.2 L1154.9,585.1" stroke="#00ff00"/>
<path d="M683.6,570.4 L684.0,575.5 L686.3,580.6 L690.4,585.4 L696.2,590.0 L703.7,594.3 L712.6,598.1 L855.8,651.9 L866.1,655.3 L877.5,658.2 L889.9,660.5 L903.0,662.3 L916.6,663.4 L930.5,663.8 L944.4,663.7 L958.1,662.8 L971.4,661.4 L984.0,659.3 L995.7,656.7 L1006.4,653.5 L1121.6,614.3 L1131.0,610.6 L1139.1,606.5 L1145.5,602.1 L1150.4,597.3 L1153.5,592.3 L1154.9,587.2" stroke="#00ffff"/>
</g>
<path d="M742.3,282 L751.8,285.5 L742.3,405 L734.1,470 L727.8,533 L723,571 L719.3,601.5 L716.8,601.5 Z" fill="#0000ff"/>
<path d="M819,306.5 L828.5,310 L815.1,470 L809,533 L803,575 L797.5,618.3 L795,618.3 Z" fill="#0000ff"/>
<path d="M744.1,280.8 L751.8,278.4 L828.4,306.7 L820,310.5 Z" fill="#ff0000"/>
<g fill="none" stroke="#f2a458" stroke-width="1.8" stroke-linejoin="round">
<path d="M690,388.4 L752.9,391.5 L743,392.8 L710.4,400.8 Z"/>
<path d="M671,557.3 L739.4,560.4 L712,568.8 Z"/>
<path d="M703.3,400.2 L711.3,404.4 L730.1,402.6" stroke-width="1.5"/>
<path d="M730.1,402.6 L737.6,402.6" stroke-width="2.1"/>
<path d="M702.8,405.9 L710.8,410.1 L729.6,408.3" stroke-width="1.5"/>
<path d="M729.6,408.3 L737.1,408.3" stroke-width="2.1"/>
<path d="M702.3,411.6 L710.3,415.8 L729.2,414.0" stroke-width="1.5"/>
<path d="M729.2,414.0 L736.7,414.0" stroke-width="2.1"/>
<path d="M701.8,417.3 L709.8,421.5 L728.7,419.7" stroke-width="1.5"/>
<path d="M728.7,419.7 L736.2,419.7" stroke-width="2.1"/>
<path d="M701.4,423.0 L709.4,427.2 L728.3,425.4" stroke-width="1.5"/>
<path d="M728.3,425.4 L735.8,425.4" stroke-width="2.1"/>
<path d="M700.9,428.7 L708.9,432.9 L727.8,431.1" stroke-width="1.5"/>
<path d="M727.8,431.1 L735.3,431.1" stroke-width="2.1"/>
<path d="M700.4,434.4 L708.4,438.6 L727.3,436.8" stroke-width="1.5"/>
<path d="M727.3,436.8 L734.8,436.8" stroke-width="2.1"/>
<path d="M699.9,440.1 L707.9,444.3 L726.9,442.5" stroke-width="1.5"/>
<path d="M726.9,442.5 L734.4,442.5" stroke-width="2.1"/>
<path d="M699.4,445.8 L707.4,450.0 L726.4,448.2" stroke-width="1.5"/>
<path d="M726.4,448.2 L733.9,448.2" stroke-width="2.1"/>
<path d="M698.9,451.5 L706.9,455.7 L726.0,453.9" stroke-width="1.5"/>
<path d="M726.0,453.9 L733.5,453.9" stroke-width="2.1"/>
<path d="M698.5,457.2 L706.5,461.4 L725.5,459.6" stroke-width="1.5"/>
<path d="M725.5,459.6 L733.0,459.6" stroke-width="2.1"/>
<path d="M698.0,462.9 L706.0,467.1 L725.1,465.3" stroke-width="1.5"/>
<path d="M725.1,465.3 L732.6,465.3" stroke-width="2.1"/>
<path d="M697.5,468.6 L705.5,472.8 L724.6,471.0" stroke-width="1.5"/>
<path d="M724.6,471.0 L732.1,471.0" stroke-width="2.1"/>
<path d="M697.0,474.3 L705.0,478.5 L724.2,476.7" stroke-width="1.5"/>
<path d="M724.2,476.7 L731.7,476.7" stroke-width="2.1"/>
<path d="M696.5,480.0 L704.5,484.2 L723.7,482.4" stroke-width="1.5"/>
<path d="M723.7,482.4 L731.2,482.4" stroke-width="2.1"/>
<path d="M696.0,485.7 L704.0,489.9 L723.3,488.1" stroke-width="1.5"/>
<path d="M723.3,488.1 L730.8,488.1" stroke-width="2.1"/>
<path d="M695.5,491.4 L703.5,495.6 L722.8,493.8" stroke-width="1.5"/>
<path d="M722.8,493.8 L730.3,493.8" stroke-width="2.1"/>
<path d="M695.1,497.1 L703.1,501.3 L722.3,499.5" stroke-width="1.5"/>
<path d="M722.3,499.5 L729.8,499.5" stroke-width="2.1"/>
<path d="M694.6,502.8 L702.6,507.0 L721.9,505.2" stroke-width="1.5"/>
<path d="M721.9,505.2 L729.2,505.2" stroke-width="2.1"/>
<path d="M694.1,508.5 L702.1,512.7 L721.4,510.9" stroke-width="1.5"/>
<path d="M721.4,510.9 L728.5,510.9" stroke-width="2.1"/>
<path d="M693.6,514.2 L701.6,518.4 L721.0,516.6" stroke-width="1.5"/>
<path d="M721.0,516.6 L727.8,516.6" stroke-width="2.1"/>
<path d="M693.1,519.9 L701.1,524.1 L720.5,522.3" stroke-width="1.5"/>
<path d="M720.5,522.3 L727.1,522.3" stroke-width="2.1"/>
<path d="M692.6,525.6 L700.6,529.8 L720.1,528.0" stroke-width="1.5"/>
<path d="M720.1,528.0 L726.4,528.0" stroke-width="2.1"/>
<path d="M692.2,531.3 L700.2,535.5 L719.6,533.7" stroke-width="1.5"/>
<path d="M719.6,533.7 L725.8,533.7" stroke-width="2.1"/>
<path d="M691.7,537.0 L699.7,541.2 L719.2,539.4" stroke-width="1.5"/>
<path d="M719.2,539.4 L725.1,539.4" stroke-width="2.1"/>
<path d="M691.2,542.7 L699.2,546.9 L718.7,545.1" stroke-width="1.5"/>
<path d="M718.7,545.1 L724.4,545.1" stroke-width="2.1"/>
<path d="M690.7,548.4 L698.7,552.6 L718.2,550.8" stroke-width="1.5"/>
<path d="M718.2,550.8 L723.7,550.8" stroke-width="2.1"/>
<path d="M690.2,554.1 L698.2,558.3 L717.8,556.5" stroke-width="1.5"/>
<path d="M717.8,556.5 L723.0,556.5" stroke-width="2.1"/>
<path d="M689.7,559.8 L697.7,564.0 L717.3,562.2" stroke-width="1.5"/>
<path d="M717.3,562.2 L722.3,562.2" stroke-width="2.1"/>
<path d="M689.2,565.5 L697.2,569.7 L716.9,567.9" stroke-width="1.5"/>
<path d="M716.9,567.9 L721.7,567.9" stroke-width="2.1"/>
</g>
<g fill="none" stroke="#f9d1dd" stroke-width="2.9" stroke-linecap="round">
<path d="M737.30,459.70 C739.04,459.18 742.53,457.45 747.77,456.57 C753.00,455.68 761.48,454.44 768.70,454.40 C775.92,454.36 783.63,455.13 791.10,456.30 C798.57,457.47 809.77,460.55 813.50,461.40"/>
<path d="M736.40,474.90 C738.03,474.49 741.28,473.15 746.17,472.43 C751.05,471.72 758.71,470.29 765.70,470.60 C772.69,470.91 780.63,472.53 788.10,474.30 C795.57,476.07 806.77,480.05 810.50,481.20"/>
<path d="M731.30,516.50 C732.88,516.11 736.03,514.85 740.77,514.17 C745.50,513.48 753.05,512.37 759.70,512.40 C766.35,512.43 773.67,513.17 780.65,514.35 C787.63,515.53 798.11,518.64 801.60,519.50"/>
<path d="M726.80,552.40 C728.46,551.82 731.78,549.90 736.77,548.93 C741.75,547.97 750.01,546.72 756.70,546.60 C763.39,546.48 770.17,547.13 776.90,548.20 C783.63,549.27 793.73,552.20 797.10,553.00"/>
<path d="M717.80,601.80 C719.63,601.38 723.28,600.00 728.77,599.27 C734.25,598.53 743.80,597.24 750.70,597.40 C757.60,597.56 763.67,598.73 770.15,600.20 C776.63,601.67 786.36,605.20 789.60,606.20"/>
<path d="M716.40,618.80 C718.31,618.24 722.12,616.40 727.83,615.47 C733.55,614.53 743.77,613.05 750.70,613.20 C757.63,613.35 763.17,614.77 769.40,616.35 C775.63,617.93 784.98,621.64 788.10,622.70"/>
<path d="M717.8,601.8 L716.4,618.8"/>
</g>
<g fill="none" stroke="#ffb800" stroke-width="2.3" stroke-linejoin="round">
<path d="M816.5,461.2 Q826.8,462.2 825.8,470.2 Q824.8,477.2 818,479.2 Z"/>
<path d="M818,474.7 Q825.4,475.7 824.4,483.6 Q823.4,487.6 816.5,489.6 Z"/>
<path d="M816.5,489.6 Q824.0,490.6 823,501.6 Q822.0,508.5 810.5,510.5 Z"/>
<path d="M809,528.5 Q819.6,529.5 818.6,540.5 Q817.6,548.9 806,550.9 Z"/>
<path d="M806,561.4 Q815.2,562.4 814.2,573.3 Q813.2,583.3 801.6,585.3 Z"/>
<path d="M798.6,609.2 Q809.2,610.2 808.2,624.2 Q807.2,634.1 794.1,636.1 Z"/>
</g>
<path d="M940.9,455.0 L878.7,432.3" stroke="#2a9a4a" stroke-width="1.4" fill="none"/><path d="M862.7,426.5 L879.8,429.3 L877.6,435.3 Z" fill="#2a9a4a"/>
<path d="M940.9,455.0 L994.9,437.9" stroke="#d83838" stroke-width="1.4" fill="none"/><path d="M1009.2,433.4 L995.8,440.8 L994.0,435.1 Z" fill="#d83838"/>
<path d="M940.9,455.0 L947.0,378.0" stroke="#1038d8" stroke-width="1.4" fill="none"/><path d="M948.7,357.1 L950.5,378.3 L943.5,377.8 Z" fill="#1038d8"/>
<g font-family="Liberation Sans, sans-serif" font-size="12.5"><text x="927.3" y="355.3" fill="#1a40e0">ZM</text><text x="992.3" y="430" fill="#d83838">XM</text><text x="863.2" y="422.5" fill="#2a9a4a">YM</text></g>
<g stroke="#58595b" stroke-width="0.5" stroke-linejoin="round">
<path d="M978.57,837.70 Q977.52,824.92 973.30,816.26 L959.00,808.00 L937.80,820.24 Q947.41,820.92 959.00,826.40 Z" fill="#8aa6b6"/>
<path d="M959.00,826.40 Q947.41,820.92 937.80,820.24 L923.49,828.50 L923.49,852.98 Q928.88,845.00 939.43,837.70 Z" fill="#6b9ab5"/>
<path d="M939.43,837.70 Q928.88,845.00 923.49,852.98 L923.49,869.50 L944.70,881.74 Q940.48,873.08 939.43,860.30 Z" fill="#548fb0"/>
<path d="M939.43,860.30 Q940.48,873.08 944.70,881.74 L959.00,890.00 L980.20,877.76 Q970.59,877.08 959.00,871.60 Z" fill="#2c82ae"/>
<path d="M959.00,871.60 Q970.59,877.08 980.20,877.76 L994.51,869.50 L994.51,845.02 Q989.12,853.00 978.57,860.30 Z" fill="#2b7ba6"/>
<path d="M978.57,860.30 Q989.12,853.00 994.51,845.02 L994.51,828.50 L973.30,816.26 Q977.52,824.92 978.57,837.70 Z" fill="#3e89af"/>
</g>
<path d="M959.00,830.70 L974.85,839.85 L959.00,849.00 L943.15,839.85Z" fill="#6f9bb3"/>
<path d="M943.15,839.85 L959.00,849.00 L959.00,867.30 L943.15,858.15Z" fill="#548fb0"/>
<path d="M959.00,849.00 L974.85,839.85 L974.85,858.15 L959.00,867.30Z" fill="#2b7ba6"/>
<g font-weight="bold" fill="#a9aaac"><text x="1001.5" y="857.4" font-family="Liberation Sans, sans-serif" font-size="48" textLength="61" lengthAdjust="spacingAndGlyphs">3D</text><text x="1066.5" y="854.2" font-family="Noto Sans CJK SC, sans-serif" font-weight="900" font-size="39" textLength="114" lengthAdjust="spacingAndGlyphs">世界网</text><text x="1004.5" y="876" font-family="Liberation Sans, sans-serif" font-weight="normal" stroke="#a9aaac" stroke-width="0.35" font-size="11.6" textLength="174.5" lengthAdjust="spacingAndGlyphs">WWW.3DSJW.COM</text></g>
</svg></div>
<div id="topline"></div>
<div id="tab"><svg style="position:absolute;left:5.5px;top:0px;width:20px;height:17px" viewBox="0 0 20 17"><defs><linearGradient id="cylt" x1="0" x2="1" y1="0" y2="0"><stop offset="0" stop-color="#1828b4"/><stop offset=".4" stop-color="#4a5ce4"/><stop offset="1" stop-color="#0a1478"/></linearGradient><linearGradient id="tb" x1="0" x2="1" y1="1" y2="0"><stop offset="0" stop-color="#0a1a70"/><stop offset=".55" stop-color="#2f6ae8"/><stop offset="1" stop-color="#0c2a9a"/></linearGradient><linearGradient id="tbd" x1="0" x2="1" y1="1" y2="0"><stop offset="0" stop-color="#a9aec6"/><stop offset=".55" stop-color="#d6d9e6"/><stop offset="1" stop-color="#b2b7cc"/></linearGradient><linearGradient id="wr" x1="0" x2="1" y1="0" y2="1"><stop offset="0" stop-color="#ffd428"/><stop offset=".45" stop-color="#fff2a8"/><stop offset="1" stop-color="#e8a400"/></linearGradient><pattern id="hat" width="3.2" height="3.2" patternUnits="userSpaceOnUse" patternTransform="rotate(40)"><rect width="3.2" height="3.2" fill="#f2f4ff"/><rect width="1" height="3.2" fill="#1a2ad0"/></pattern></defs><rect x="3.2" y="1" width="4" height="11.6" fill="url(#cylt)"/><path d="M16.4,4.6 H11.4 L9.2,6.2 H15.6 L14,7.6 H8 M2,9 H10.6 L8.6,10.6 H7.6" fill="none" stroke="#3c4658" stroke-width="0.8"/><path d="M5.2,10.4 L5.7,13.1 L8.3,12.2 L6.2,14.0 L8.3,15.8 L5.7,14.9 L5.2,17.6 L4.7,14.9 L2.1,15.8 L4.2,14.0 L2.1,12.2 L4.7,13.1Z" fill="#f6d830"/></svg><svg style="position:absolute;left:73px;top:2.5px;width:12px;height:12px" viewBox="0 0 13 13"><path d="M8,2 H2 V11.4 H10.4 V7" fill="none" stroke="#fff" stroke-width="1.7"/><path d="M6,8 L6.6,5.4 L10.4,1.4 L12,3 L8.4,7 Z" fill="#fff"/></svg><svg style="position:absolute;left:89.5px;top:3px;width:10px;height:10px" viewBox="0 0 11 11"><path d="M1.6,1.6 L9.4,9.4 M9.4,1.6 L1.6,9.4" stroke="#b9b3b0" stroke-width="2"/></svg><span>002.prt</span></div>
<div id="title"><svg style="position:absolute;left:6px;top:6px;width:16px;height:16px" viewBox="0 0 16 16"><path d="M6.46,0.76 L9.54,0.76 L9.35,2.77 L10.74,3.35 L12.03,1.79 L14.21,3.97 L12.65,5.26 L13.23,6.65 L15.24,6.46 L15.24,9.54 L13.23,9.35 L12.65,10.74 L14.21,12.03 L12.03,14.21 L10.74,12.65 L9.35,13.23 L9.54,15.24 L6.46,15.24 L6.65,13.23 L5.26,12.65 L3.97,14.21 L1.79,12.03 L3.35,10.74 L2.77,9.35 L0.76,9.54 L0.76,6.46 L2.77,6.65 L3.35,5.26 L1.79,3.97 L3.97,1.79 L5.26,3.35 L6.65,2.77Z M8,4.9 A3.1,3.1 0 1 0 8.01,4.9 Z" fill="#fff" fill-rule="evenodd"/><circle cx="8" cy="8" r="1.3" fill="#fff"/></svg><span>深度轮廓铣 - <em>[ZLEVEL_PROFILE_COPY]</em></span><svg style="position:absolute;left:306px;top:7px;width:13px;height:13px" viewBox="0 0 13 13"><path d="M1.3,1.3 L11.7,11.7 M11.7,1.3 L1.3,11.7" stroke="#fff" stroke-width="1.8"/></svg></div>
<div id="lline"></div>
<div id="pbg"></div><div id="pbot"></div>
<div class="sec hl" style="top:49px;height:207px"><b>几何体</b><svg class="chev" viewBox="0 0 12 10"><path d="M1 8.8 L6 1.4 L11 8.8" /></svg></div>
<div class="sec" style="top:259px;height:24px"><b>工具</b><svg class="chev" viewBox="0 0 12 10"><path d="M1 1.2 L6 8.6 L11 1.2" /></svg></div>
<div class="sec" style="top:286px;height:24px"><b>刀轴</b><svg class="chev" viewBox="0 0 12 10"><path d="M1 1.2 L6 8.6 L11 1.2" /></svg></div>
<div class="sec" style="top:313px;height:342px"><b>刀轨设置</b><svg class="chev" viewBox="0 0 12 10"><path d="M1 8.8 L6 1.4 L11 8.8" /></svg></div>
<div class="sec" style="top:658px;height:24px"><b>机床控制</b><svg class="chev" viewBox="0 0 12 10"><path d="M1 1.2 L6 8.6 L11 1.2" /></svg></div>
<div class="sec" style="top:685px;height:24px"><b>程序</b><svg class="chev" viewBox="0 0 12 10"><path d="M1 1.2 L6 8.6 L11 1.2" /></svg></div>
<div class="sec" style="top:712px;height:24px"><b>描述</b><svg class="chev" viewBox="0 0 12 10"><path d="M1 1.2 L6 8.6 L11 1.2" /></svg></div>
<div class="sec" style="top:739px;height:24px"><b>选项</b><svg class="chev" viewBox="0 0 12 10"><path d="M1 1.2 L6 8.6 L11 1.2" /></svg></div>
<div class="sec" style="top:766px;height:71px"><b>操作</b><svg class="chev" viewBox="0 0 12 10"><path d="M1 8.8 L6 1.4 L11 8.8" /></svg></div>
<div class="lbl" style="left:20px;top:84px">几何体</div>
<div class="dd" style="left:133px;top:79px;width:117px;height:25px"><span style="left:5px">MCS</span><i></i></div>
<div class="btn" style="left:252px;top:79px"><svg viewBox="0 0 30 30"><path d="M8,10.5 L16,6.5 L25.5,10 L17.5,13.5 Z" fill="#cfd8fb" stroke="#4a5ae0" stroke-width="0.7"/><path d="M8,10.5 L17.5,13.5 L17.5,26 L8,21 Z" fill="#8fa2f2" stroke="#4a5ae0" stroke-width="0.7"/><path d="M17.5,13.5 L25.5,10 L25.5,21.5 L17.5,26 Z" fill="#4466e6" stroke="#3a4ad8" stroke-width="0.7"/><path d="M11.8,3.1 L11.8,7.9 L16.2,5.9 L12.7,9.3 L17.3,11.0 L12.5,11.0 L14.5,15.4 L11.1,11.9 L9.4,16.5 L9.4,11.7 L5.0,13.7 L8.5,10.3 L3.9,8.6 L8.7,8.6 L6.7,4.2 L10.1,7.7Z" fill="#3f7fb0" opacity=".85"/><path d="M13.4,5.4 L12.2,8.6 L15.7,8.6 L12.6,10.1 L15.0,12.6 L11.8,11.4 L11.8,14.9 L10.3,11.8 L7.8,14.2 L9.0,11.0 L5.5,11.0 L8.6,9.5 L6.2,7.0 L9.4,8.2 L9.4,4.7 L10.9,7.8Z" fill="#fbf23a"/><circle cx="12.3" cy="18.4" r="3.3" fill="#f6b818" stroke="#f01818" stroke-width="1"/><circle cx="7.8" cy="20.8" r="3.4" fill="#fbe23a" stroke="#f01818" stroke-width="1"/></svg></div>
<div class="btn" style="left:286px;top:79px"><svg viewBox="0 0 30 30"><defs><linearGradient id="cyl" x1="0" x2="1" y1="0" y2="0"><stop offset="0" stop-color="#1828b4"/><stop offset=".4" stop-color="#4a5ce4"/><stop offset="1" stop-color="#0a1478"/></linearGradient><linearGradient id="tb" x1="0" x2="1" y1="1" y2="0"><stop offset="0" stop-color="#0a1a70"/><stop offset=".55" stop-color="#2f6ae8"/><stop offset="1" stop-color="#0c2a9a"/></linearGradient><linearGradient id="tbd" x1="0" x2="1" y1="1" y2="0"><stop offset="0" stop-color="#a9aec6"/><stop offset=".55" stop-color="#d6d9e6"/><stop offset="1" stop-color="#b2b7cc"/></linearGradient><linearGradient id="wr" x1="0" x2="1" y1="0" y2="1"><stop offset="0" stop-color="#ffd428"/><stop offset=".45" stop-color="#fff2a8"/><stop offset="1" stop-color="#e8a400"/></linearGradient><pattern id="hat" width="3.2" height="3.2" patternUnits="userSpaceOnUse" patternTransform="rotate(40)"><rect width="3.2" height="3.2" fill="#f2f4ff"/><rect width="1" height="3.2" fill="#1a2ad0"/></pattern></defs><g transform="translate(14.6,15.6) rotate(-45)"><path d="M10.2,-2.6 L5.2,-2.6 A2.6,2.6 0 0 0 5.2,2.6 L10.2,2.6 L10,3.6 A7,7 0 0 1 -2.58,2.39 L-8.4,2.19 A3.4,3.4 0 0 1 -13.79,1.95 L-13.9,1 L-11.4,1 A1,1 0 0 0 -11.4,-1 L-13.9,-1 L-13.79,-1.95 A3.4,3.4 0 0 1 -8.4,-2.19 L-2.58,-2.39 A7,7 0 0 1 10,-3.6 Z" fill="url(#wr)" stroke="#8a6000" stroke-width="0.9" stroke-linejoin="round"/><path d="M5.2,-2.6 A2.6,2.6 0 0 0 5.2,2.6" fill="none" stroke="#4a3a20" stroke-width="1.3"/><path d="M-8,-0.6 L-1,-0.8 M0.5,-4 A5,5 0 0 1 4,-5.4" stroke="#fffbe0" stroke-width="1.3" fill="none" stroke-linecap="round"/></g></svg></div>
<div class="lbl" style="left:20px;top:124px">指定部件</div>
<div class="btn" style="left:252px;top:113px"><svg viewBox="0 0 30 30"><path d="M4.6,9.2 L14.2,4.3 L18.8,6.3 L18.8,9.4 L21.2,8.6 L25.8,10.8 L25.8,18.6 L16.8,23.6 L4.6,17.6 Z" fill="#dfe8fb" stroke="#3a44f0" stroke-width="0.9" stroke-linejoin="round"/><path d="M4.6,9.2 L9.4,11.3 L18.8,6.3 M9.4,11.3 L9.4,16.6 L12.2,17.8 L12.2,13.6 L21.2,8.6 M12.2,17.8 L16.8,15.4 L16.8,23.6 M16.8,15.4 L25.8,10.8 M12.2,13.6 L16.8,15.4" fill="none" stroke="#3a44f0" stroke-width="0.9" stroke-linejoin="round"/><path d="M9.4,11.3 L18.8,6.3 L18.8,9.4 L12.2,13.6 L12.2,17.8 L9.4,16.6 Z" fill="#a9b3cf" opacity=".75"/><path d="M16.8,15.4 L25.8,10.8 L25.8,18.6 L16.8,23.6 Z" fill="#9fb0e6" opacity=".8"/></svg></div>
<div class="btn" style="left:286px;top:113px"><svg viewBox="0 0 30 30"><g transform="translate(15.3,15) rotate(40)"><path d="M-13,-3 C-14.4,-2.4 -14.4,2.4 -13,3 L1.2,3.2 L5.6,6.3 L5.6,-6.3 L1.2,-3.2 Z" fill="url(#tb)" stroke="#0a1a80" stroke-width="0.5"/><ellipse cx="6.4" cy="0" rx="3" ry="6.5" fill="#0d36d8"/><ellipse cx="7.3" cy="0" rx="2.2" ry="5" fill="#f4ee3c"/></g></svg></div>
<div class="lbl" style="left:20px;top:158px">指定检查</div>
<div class="btn" style="left:252px;top:147px"><svg viewBox="0 0 30 30"><path d="M3.1,13.6 L12.9,7.8 L22.3,11.3 L25.8,16.6 L25.2,21.3 L21.1,24.2 L12.3,21.9 L3.5,17.7 Z" fill="#c80010" stroke="#7a0008" stroke-width="0.6"/><path d="M3.1,13.6 L12.9,7.8 L22.3,11.3 L25.8,16.6 L21.3,19.6 L12.5,17.4 Z" fill="#f81420" stroke="#8a0008" stroke-width="0.5"/><ellipse cx="14.6" cy="13.5" rx="4.6" ry="1.9" transform="rotate(22 14.6 13.5)" fill="#d80816" stroke="#90000a" stroke-width="0.7"/><path d="M12.5,17.4 L12.3,21.9 M21.3,19.6 L21.1,24.2" stroke="#7a0008" stroke-width="0.6"/></svg></div>
<div class="btn dis" style="left:286px;top:147px"><svg viewBox="0 0 30 30"><g transform="translate(15.3,15) rotate(40)"><path d="M-13,-3 C-14.4,-2.4 -14.4,2.4 -13,3 L1.2,3.2 L5.6,6.3 L5.6,-6.3 L1.2,-3.2 Z" fill="url(#tbd)" stroke="#b5b9cf" stroke-width="0.5"/><ellipse cx="6.4" cy="0" rx="3" ry="6.5" fill="#a4aaca"/><ellipse cx="7.3" cy="0" rx="2.2" ry="5" fill="#e6e7d2"/></g></svg></div>
<div class="lbl" style="left:20px;top:192px">指定切削区域</div>
<div class="btn" style="left:252px;top:181px"><svg viewBox="0 0 30 30"><path d="M4.3,9.2 L4.3,18.2 L16.4,24.3 L25.8,19.6 L25.8,16.4 L16.4,21.3 Z" fill="#dcebfb" stroke="#3a44f0" stroke-width="0.8" stroke-linejoin="round"/><path d="M16.4,24.3 L16.4,21.3 C18,17.5 23,15.4 25.8,16.4 L25.8,19.6 Z" fill="#8fa6e8" stroke="#3a44f0" stroke-width="0.8"/><path d="M4.3,9.2 L12.3,4.4 C15,3.6 17.6,4.6 18.6,6.6 C20,10 22.5,14.6 25.8,16.4 C22,15.6 18,17.6 16.4,21.3 C12,20.5 10.5,11.5 4.3,9.2 Z" fill="#0c7c7e" stroke="#064a52" stroke-width="0.7"/><path d="M6.5,9 L13,5.2 C15,4.7 16.8,5.4 17.6,7" fill="none" stroke="#49a9a6" stroke-width="0.9"/></svg></div>
<div class="btn dis" style="left:286px;top:181px"><svg viewBox="0 0 30 30"><g transform="translate(15.3,15) rotate(40)"><path d="M-13,-3 C-14.4,-2.4 -14.4,2.4 -13,3 L1.2,3.2 L5.6,6.3 L5.6,-6.3 L1.2,-3.2 Z" fill="url(#tbd)" stroke="#b5b9cf" stroke-width="0.5"/><ellipse cx="6.4" cy="0" rx="3" ry="6.5" fill="#a4aaca"/><ellipse cx="7.3" cy="0" rx="2.2" ry="5" fill="#e6e7d2"/></g></svg></div>
<div class="lbl" style="left:20px;top:226px">指定修剪边界</div>
<div class="btn" style="left:252px;top:215px"><svg viewBox="0 0 30 30"><path d="M5.8,5.3 H25.2 V10 M5.8,24.6 H25.2 V20.4 M25.2,10.6 H5.8 V17.8 H9.2" fill="none" stroke="#1414e8" stroke-width="1.1"/><rect x="9.5" y="11.2" width="12" height="6.4" fill="#dff0fb"/><path d="M5.6,8.2 L8,5.6 L10.4,8.4 L13.6,5.2 L15.2,8 L21,9 L23,12.6 L26,11 L24.2,15.6 L26.2,20 L14.6,19.6 L19.6,24 L17.6,24.4 L13.2,19.6 L8.2,19.8 L11.6,13.4 L7.2,10.6 Z" fill="none" stroke="#e010d8" stroke-width="1"/><path d="M12.4,11 L21.4,19.4 M21.8,10.6 L12.4,19.8" stroke="#1a1010" stroke-width="1.6" fill="none"/></svg></div>
<div class="btn dis" style="left:286px;top:215px"><svg viewBox="0 0 30 30"><g transform="translate(15.3,15) rotate(40)"><path d="M-13,-3 C-14.4,-2.4 -14.4,2.4 -13,3 L1.2,3.2 L5.6,6.3 L5.6,-6.3 L1.2,-3.2 Z" fill="url(#tbd)" stroke="#b5b9cf" stroke-width="0.5"/><ellipse cx="6.4" cy="0" rx="3" ry="6.5" fill="#a4aaca"/><ellipse cx="7.3" cy="0" rx="2.2" ry="5" fill="#e6e7d2"/></g></svg></div>
<div class="lbl" style="left:20px;top:348px">方法</div>
<div class="dd" style="left:133px;top:343px;width:117px;height:25px"><span style="left:5px">METHOD</span><i></i></div>
<div class="btn" style="left:252px;top:343px"><svg viewBox="0 0 30 30"><path d="M4.8,13 L4.8,18.1 H25.4 V11.8 C24.4,15 19.8,16.2 17.2,12.6 C15,16 9,16.4 4.8,13 Z" fill="#e6ecff" stroke="#003c7c" stroke-width="1.2" stroke-linejoin="round"/><path d="M4.8,20.2 V26.4 H25.4 V20.2 C24.6,23.6 21.4,23.6 20.4,20.4 C19.4,23.6 16.2,23.6 15.2,20.4 C14.2,23.6 11,23.6 10,20.4 C9,23.6 5.8,23.6 4.8,20.2 Z" fill="#e6ecff" stroke="#003c7c" stroke-width="1.2" stroke-linejoin="round"/><path d="M11.4,2.9 L11.4,7.9 L15.9,5.8 L12.3,9.3 L17.1,11.0 L12.1,11.0 L14.2,15.5 L10.7,11.9 L9.0,16.7 L9.0,11.7 L4.5,13.8 L8.1,10.3 L3.3,8.6 L8.3,8.6 L6.2,4.1 L9.7,7.7Z" fill="#3f7fb0" opacity=".85"/><path d="M13.1,5.2 L11.8,8.6 L15.5,8.6 L12.2,10.1 L14.8,12.7 L11.4,11.4 L11.4,15.1 L9.9,11.8 L7.3,14.4 L8.6,11.0 L4.9,11.0 L8.2,9.5 L5.6,6.9 L9.0,8.2 L9.0,4.5 L10.5,7.8Z" fill="#fbf23a"/></svg></div>
<div class="btn dis" style="left:286px;top:343px"><svg viewBox="0 0 30 30"><g transform="translate(14.6,15.6) rotate(-45)"><path d="M10.2,-2.6 L5.2,-2.6 A2.6,2.6 0 0 0 5.2,2.6 L10.2,2.6 L10,3.6 A7,7 0 0 1 -2.58,2.39 L-8.4,2.19 A3.4,3.4 0 0 1 -13.79,1.95 L-13.9,1 L-11.4,1 A1,1 0 0 0 -11.4,-1 L-13.9,-1 L-13.79,-1.95 A3.4,3.4 0 0 1 -8.4,-2.19 L-2.58,-2.39 A7,7 0 0 1 10,-3.6 Z" fill="#dcd9c8" stroke="#c4c2b8" stroke-width="0.9" stroke-linejoin="round"/><path d="M-8,-0.6 L-1,-0.8 M0.5,-4 A5,5 0 0 1 4,-5.4" stroke="#e8e6da" stroke-width="1.3" fill="none" stroke-linecap="round"/></g></svg></div>
<div class="lbl" style="left:20px;top:382px">陡峭空间范围</div>
<div class="dd" style="left:177px;top:377px;width:141px;height:25px"><span style="left:5px">无</span><i></i></div>
<div class="lbl" style="left:20px;top:409px">合并距离</div>
<div class="inp" style="left:171px;top:404px;width:82px;height:23px"><b><span>1000.0000</span></b></div>
<div class="dd" style="left:255px;top:404px;width:63px;height:25px"><span style="left:5px">mm</span><i></i></div>
<div class="lbl" style="left:20px;top:436px">最小切削长度</div>
<div class="inp" style="left:171px;top:431px;width:82px;height:23px"><b><span>1.00000</span></b></div>
<div class="dd" style="left:255px;top:431px;width:63px;height:25px"><span style="left:5px">mm</span><i></i></div>
<div class="lbl" style="left:20px;top:463px">公共每刀切削深度</div>
<div class="dd" style="left:177px;top:458px;width:141px;height:25px"><span style="left:5px">恒定</span><i></i></div>
<div class="lbl" style="left:20px;top:490px">最大距离</div>
<div class="inp" style="left:171px;top:485px;width:82px;height:23px"><b><span>1.00000</span></b></div>
<div class="dd" style="left:255px;top:485px;width:63px;height:25px"><span style="left:5px">mm</span><i></i></div>
<div class="lbl" style="left:20px;top:520.5px">切削层</div>
<div class="btn" style="left:286px;top:512px"><svg viewBox="0 0 30 30"><path d="M3.7,6 H16.3 M3.7,11 H14.5 M3.7,16 H13 M3.7,21.3 H16.3 M3.7,24.6 H16.3" stroke="#000" stroke-width="1.7" fill="none"/><path d="M3.7,8.5 H15 M3.7,13.5 H13.6 M3.7,18.7 H12.6" stroke="#000" stroke-width="0.9" fill="none"/><path d="M19.5,5.4 L25,4.6 L20.2,11 L23.8,10.4 L12.6,22.6 L17,13.6 L14.2,14 Z" fill="#f2d820" stroke="#6a5a00" stroke-width="0.6" stroke-linejoin="round"/></svg></div>
<div class="lbl" style="left:20px;top:554.5px">切削参数</div>
<div class="btn" style="left:286px;top:546px"><svg viewBox="0 0 30 30"><defs><linearGradient id="cyl" x1="0" x2="1" y1="0" y2="0"><stop offset="0" stop-color="#1828b4"/><stop offset=".4" stop-color="#4a5ce4"/><stop offset="1" stop-color="#0a1478"/></linearGradient><linearGradient id="tb" x1="0" x2="1" y1="1" y2="0"><stop offset="0" stop-color="#0a1a70"/><stop offset=".55" stop-color="#2f6ae8"/><stop offset="1" stop-color="#0c2a9a"/></linearGradient><linearGradient id="tbd" x1="0" x2="1" y1="1" y2="0"><stop offset="0" stop-color="#a9aec6"/><stop offset=".55" stop-color="#d6d9e6"/><stop offset="1" stop-color="#b2b7cc"/></linearGradient><linearGradient id="wr" x1="0" x2="1" y1="0" y2="1"><stop offset="0" stop-color="#ffd428"/><stop offset=".45" stop-color="#fff2a8"/><stop offset="1" stop-color="#e8a400"/></linearGradient><pattern id="hat" width="3.2" height="3.2" patternUnits="userSpaceOnUse" patternTransform="rotate(40)"><rect width="3.2" height="3.2" fill="#f2f4ff"/><rect width="1" height="3.2" fill="#1a2ad0"/></pattern></defs><path d="M6.9,12.1 H20" stroke="#1414d8" stroke-width="1.2"/><path d="M22.8,12.1 L19,10.2 V14 Z" fill="#1414d8"/><rect x="5" y="16.4" width="19.6" height="9.1" fill="url(#hat)" stroke="#000" stroke-width="1"/></svg></div>
<div class="lbl" style="left:20px;top:588.5px">非切削移动</div>
<div class="btn" style="left:286px;top:580px"><svg viewBox="0 0 30 30"><defs><linearGradient id="cyl" x1="0" x2="1" y1="0" y2="0"><stop offset="0" stop-color="#1828b4"/><stop offset=".4" stop-color="#4a5ce4"/><stop offset="1" stop-color="#0a1478"/></linearGradient><linearGradient id="tb" x1="0" x2="1" y1="1" y2="0"><stop offset="0" stop-color="#0a1a70"/><stop offset=".55" stop-color="#2f6ae8"/><stop offset="1" stop-color="#0c2a9a"/></linearGradient><linearGradient id="tbd" x1="0" x2="1" y1="1" y2="0"><stop offset="0" stop-color="#a9aec6"/><stop offset=".55" stop-color="#d6d9e6"/><stop offset="1" stop-color="#b2b7cc"/></linearGradient><linearGradient id="wr" x1="0" x2="1" y1="0" y2="1"><stop offset="0" stop-color="#ffd428"/><stop offset=".45" stop-color="#fff2a8"/><stop offset="1" stop-color="#e8a400"/></linearGradient><pattern id="hat" width="3.2" height="3.2" patternUnits="userSpaceOnUse" patternTransform="rotate(40)"><rect width="3.2" height="3.2" fill="#f2f4ff"/><rect width="1" height="3.2" fill="#1a2ad0"/></pattern></defs><path d="M21.8,6.4 H10.4 M5.3,7.4 V11.6 M24.6,14.2 V10" stroke="#d81414" stroke-width="1.2" fill="none"/><path d="M7.4,6.4 L11,4.6 V8.2 Z M5.3,14.4 L3.6,11 H7 Z M24.6,7 L22.9,10.4 H26.3 Z" fill="#d81414"/><rect x="5" y="16.6" width="19.6" height="9.1" fill="url(#hat)" stroke="#000" stroke-width="1"/></svg></div>
<div class="lbl" style="left:20px;top:622.5px">进给率和速度</div>
<div class="btn" style="left:286px;top:614px"><svg viewBox="0 0 30 30"><defs><linearGradient id="cyl" x1="0" x2="1" y1="0" y2="0"><stop offset="0" stop-color="#1828b4"/><stop offset=".4" stop-color="#4a5ce4"/><stop offset="1" stop-color="#0a1478"/></linearGradient><linearGradient id="tb" x1="0" x2="1" y1="1" y2="0"><stop offset="0" stop-color="#0a1a70"/><stop offset=".55" stop-color="#2f6ae8"/><stop offset="1" stop-color="#0c2a9a"/></linearGradient><linearGradient id="tbd" x1="0" x2="1" y1="1" y2="0"><stop offset="0" stop-color="#a9aec6"/><stop offset=".55" stop-color="#d6d9e6"/><stop offset="1" stop-color="#b2b7cc"/></linearGradient><linearGradient id="wr" x1="0" x2="1" y1="0" y2="1"><stop offset="0" stop-color="#ffd428"/><stop offset=".45" stop-color="#fff2a8"/><stop offset="1" stop-color="#e8a400"/></linearGradient><pattern id="hat" width="3.2" height="3.2" patternUnits="userSpaceOnUse" patternTransform="rotate(40)"><rect width="3.2" height="3.2" fill="#f2f4ff"/><rect width="1" height="3.2" fill="#1a2ad0"/></pattern></defs><path d="M18.6,10.9 A7.9,3 0 1 0 16,13.2" fill="none" stroke="#e01010" stroke-width="1.5"/><rect x="8.1" y="3" width="5.4" height="18.1" fill="url(#cyl)"/><ellipse cx="10.8" cy="3" rx="2.7" ry="0.8" fill="#4a5ce4"/><path d="M9.0,6.1 L11.1,4.6" stroke="#dfe6ff" stroke-width="0.8" opacity=".8"/><path d="M9.0,9.1 L11.1,7.6" stroke="#dfe6ff" stroke-width="0.8" opacity=".8"/><path d="M9.0,12.1 L11.1,10.6" stroke="#dfe6ff" stroke-width="0.8" opacity=".8"/><path d="M9.0,15.1 L11.1,13.6" stroke="#dfe6ff" stroke-width="0.8" opacity=".8"/><path d="M9.0,18.1 L11.1,16.6" stroke="#dfe6ff" stroke-width="0.8" opacity=".8"/><path d="M9.0,21.1 L11.1,19.6" stroke="#dfe6ff" stroke-width="0.8" opacity=".8"/><path d="M3.2,11.6 A7.9,3 0 0 0 16.6,13" fill="none" stroke="#e01010" stroke-width="1.5"/><path d="M16.6,13 L19.4,10.4 L19.4,14.4 Z" fill="#e01010"/><path d="M12,21.2 C13,24.4 17,23.6 21.4,23" fill="none" stroke="#2a56e8" stroke-width="2.4"/><path d="M26.8,22.6 L21,19.6 L21.6,26 Z" fill="#2a56e8"/></svg></div>
<div class="btn" style="left:102px;top:796px"><svg viewBox="0 0 30 30"><defs><linearGradient id="cyl" x1="0" x2="1" y1="0" y2="0"><stop offset="0" stop-color="#1828b4"/><stop offset=".4" stop-color="#4a5ce4"/><stop offset="1" stop-color="#0a1478"/></linearGradient><linearGradient id="tb" x1="0" x2="1" y1="1" y2="0"><stop offset="0" stop-color="#0a1a70"/><stop offset=".55" stop-color="#2f6ae8"/><stop offset="1" stop-color="#0c2a9a"/></linearGradient><linearGradient id="tbd" x1="0" x2="1" y1="1" y2="0"><stop offset="0" stop-color="#a9aec6"/><stop offset=".55" stop-color="#d6d9e6"/><stop offset="1" stop-color="#b2b7cc"/></linearGradient><linearGradient id="wr" x1="0" x2="1" y1="0" y2="1"><stop offset="0" stop-color="#ffd428"/><stop offset=".45" stop-color="#fff2a8"/><stop offset="1" stop-color="#e8a400"/></linearGradient><pattern id="hat" width="3.2" height="3.2" patternUnits="userSpaceOnUse" patternTransform="rotate(40)"><rect width="3.2" height="3.2" fill="#f2f4ff"/><rect width="1" height="3.2" fill="#1a2ad0"/></pattern></defs><path d="M26.1,9.4 H18.8 L15.2,11.6 H25 L22.4,13.5 H13.2 M5.2,15.5 H17.7 L14.5,17.6 H13" fill="none" stroke="#3a4048" stroke-width="1"/><rect x="7" y="5.2" width="6" height="15.400000000000002" fill="url(#cyl)"/><ellipse cx="10.0" cy="5.2" rx="3.0" ry="0.8" fill="#4a5ce4"/><path d="M7.9,8.3 L10.3,6.8" stroke="#dfe6ff" stroke-width="0.8" opacity=".8"/><path d="M7.9,11.3 L10.3,9.8" stroke="#dfe6ff" stroke-width="0.8" opacity=".8"/><path d="M7.9,14.3 L10.3,12.8" stroke="#dfe6ff" stroke-width="0.8" opacity=".8"/><path d="M7.9,17.3 L10.3,15.8" stroke="#dfe6ff" stroke-width="0.8" opacity=".8"/><path d="M7.9,20.3 L10.3,18.8" stroke="#dfe6ff" stroke-width="0.8" opacity=".8"/><path d="M12.0,17.4 L10.4,21.5 L14.8,22.2 L10.4,22.9 L12.0,27.0 L9.2,23.6 L6.4,27.0 L8.0,22.9 L3.6,22.2 L8.0,21.5 L6.4,17.4 L9.2,20.8Z" fill="#8fc0dc" opacity=".8"/><path d="M9.2,16.8 L9.9,20.9 L13.9,19.5 L10.7,22.2 L13.9,24.9 L9.9,23.5 L9.2,27.6 L8.4,23.5 L4.5,24.9 L7.7,22.2 L4.5,19.5 L8.4,20.9Z" fill="#f6d418"/><path d="M10.5,19.5 L10.0,21.4 L11.8,21.8 L10.0,22.2 L10.5,24.1 L9.2,22.7 L7.9,24.1 L8.4,22.2 L6.6,21.8 L8.4,21.4 L7.9,19.5 L9.2,20.9Z" fill="#fffbe0"/></svg></div>
<div class="btn" style="left:136px;top:796px"><svg viewBox="0 0 30 30"><path d="M10.9,4.8 H5.1 V9.5 H10.9 V14.1 H5.1 V19.3 H10.9 V24 H5.1" fill="none" stroke="#111" stroke-width="1.3" stroke-linejoin="miter"/><path d="M15.4,24.4 C13.4,20.6 17.4,17.6 20.6,19 C22,19.6 23,20.6 23.8,21.8" fill="none" stroke="#00003c" stroke-width="1.9"/><path d="M26.4,25.2 L20.6,24 L26,19.8 Z" fill="#00003c"/></svg></div>
<div class="btn" style="left:170px;top:796px"><svg viewBox="0 0 30 30"><defs><linearGradient id="cyl" x1="0" x2="1" y1="0" y2="0"><stop offset="0" stop-color="#1828b4"/><stop offset=".4" stop-color="#4a5ce4"/><stop offset="1" stop-color="#0a1478"/></linearGradient><linearGradient id="tb" x1="0" x2="1" y1="1" y2="0"><stop offset="0" stop-color="#0a1a70"/><stop offset=".55" stop-color="#2f6ae8"/><stop offset="1" stop-color="#0c2a9a"/></linearGradient><linearGradient id="tbd" x1="0" x2="1" y1="1" y2="0"><stop offset="0" stop-color="#a9aec6"/><stop offset=".55" stop-color="#d6d9e6"/><stop offset="1" stop-color="#b2b7cc"/></linearGradient><linearGradient id="wr" x1="0" x2="1" y1="0" y2="1"><stop offset="0" stop-color="#ffd428"/><stop offset=".45" stop-color="#fff2a8"/><stop offset="1" stop-color="#e8a400"/></linearGradient><pattern id="hat" width="3.2" height="3.2" patternUnits="userSpaceOnUse" patternTransform="rotate(40)"><rect width="3.2" height="3.2" fill="#f2f4ff"/><rect width="1" height="3.2" fill="#1a2ad0"/></pattern></defs><path d="M7.1,15.8 L15.6,13.4 L26,14.6 L26,23 L16.4,26.2 L7.1,23.6 Z" fill="#fbe43a" stroke="#e8b800" stroke-width="0.7"/><path d="M9.4,16.4 L15.4,14.8 L15.4,21.4 L9.4,22.6 Z" fill="#f57a1c"/><path d="M20.4,15 L24.2,15.6 L24.2,21.2 L20.4,21.4 Z" fill="#16b8b4"/><path d="M9.4,22.6 L15.4,21.4 L24.2,21.2 L17.4,23.6 Z" fill="#ee5ad4"/><path d="M7.1,23.6 L16.4,26.2 L26,23 L26,21.6 L16.6,24.4 L7.1,22 Z" fill="#f8b818"/><rect x="15.5" y="7.9" width="5.0" height="13.700000000000001" fill="url(#cyl)"/><ellipse cx="18.0" cy="7.9" rx="2.5" ry="0.8" fill="#4a5ce4"/><path d="M16.4,11.0 L18.3,9.5" stroke="#dfe6ff" stroke-width="0.8" opacity=".8"/><path d="M16.4,14.0 L18.3,12.5" stroke="#dfe6ff" stroke-width="0.8" opacity=".8"/><path d="M16.4,17.0 L18.3,15.5" stroke="#dfe6ff" stroke-width="0.8" opacity=".8"/><path d="M16.4,20.0 L18.3,18.5" stroke="#dfe6ff" stroke-width="0.8" opacity=".8"/><path d="M4.2,8.4 L7.8,12.4 L13.6,4.6" fill="none" stroke="#12bc18" stroke-width="2.4" stroke-linejoin="round"/></svg></div>
<div class="btn" style="left:204px;top:796px"><svg viewBox="0 0 30 30"><path d="M10.9,4.8 H5.1 V9.5 H10.9 V14.1 H5.1 V19.3 H10.9 V24 H5.1" fill="none" stroke="#111" stroke-width="1.3"/><path d="M13.9,13.1 H21.6 L25.3,16.8 V25 H13.9 Z" fill="#e6ecfb" stroke="#7f8fe0" stroke-width="0.9"/><path d="M21.6,13.1 V16.8 H25.3" fill="#fff" stroke="#7f8fe0" stroke-width="0.8"/><path d="M15.6,18.4 H23.4 M15.6,20.4 H23.4 M15.6,22.4 H23.4" stroke="#9aa0b4" stroke-width="1.1"/><path d="M14,5.6 C17.6,5 19.4,7 19,9.6" fill="none" stroke="#f06010" stroke-width="2"/><path d="M19.2,13.2 L15.8,9.2 L22.4,9.6 Z" fill="#e83010"/></svg></div>
<div id="tri"></div><div id="sepa"></div>
<div id="ok">确定</div><div id="cancel">取消</div>
<svg style="position:absolute;left:150px;top:398px;width:130px;height:46px" viewBox="150 398 130 46"><path d="M174.1,407.4 C172.3,407.9 166.0,408.8 163.4,410.7 C160.8,412.6 158.8,416.2 158.5,418.7 C158.2,421.2 159.3,423.9 161.5,425.7 C163.7,427.5 168.3,428.6 171.4,429.7 C174.5,430.8 174.8,431.3 180.0,432.0 C185.2,432.7 193.9,433.4 202.3,434.1 C210.7,434.8 221.6,436.1 230.5,436.3 C239.4,436.5 250.0,436.2 255.9,435.5 C261.8,434.8 263.7,433.8 265.7,432.0 C267.7,430.2 268.0,427.8 267.8,425.0 C267.6,422.2 266.3,417.8 264.3,415.1 C262.3,412.4 260.1,410.5 255.9,408.8 C251.7,407.1 245.5,405.8 238.9,405.2 C232.3,404.6 223.7,404.9 216.4,405.2 C209.1,405.4 202.0,405.8 195.2,406.7 C188.4,407.6 178.8,410.2 175.5,410.9" fill="none" stroke="#1414e4" stroke-width="2.1" stroke-linecap="round"/></svg>
</body></html>
